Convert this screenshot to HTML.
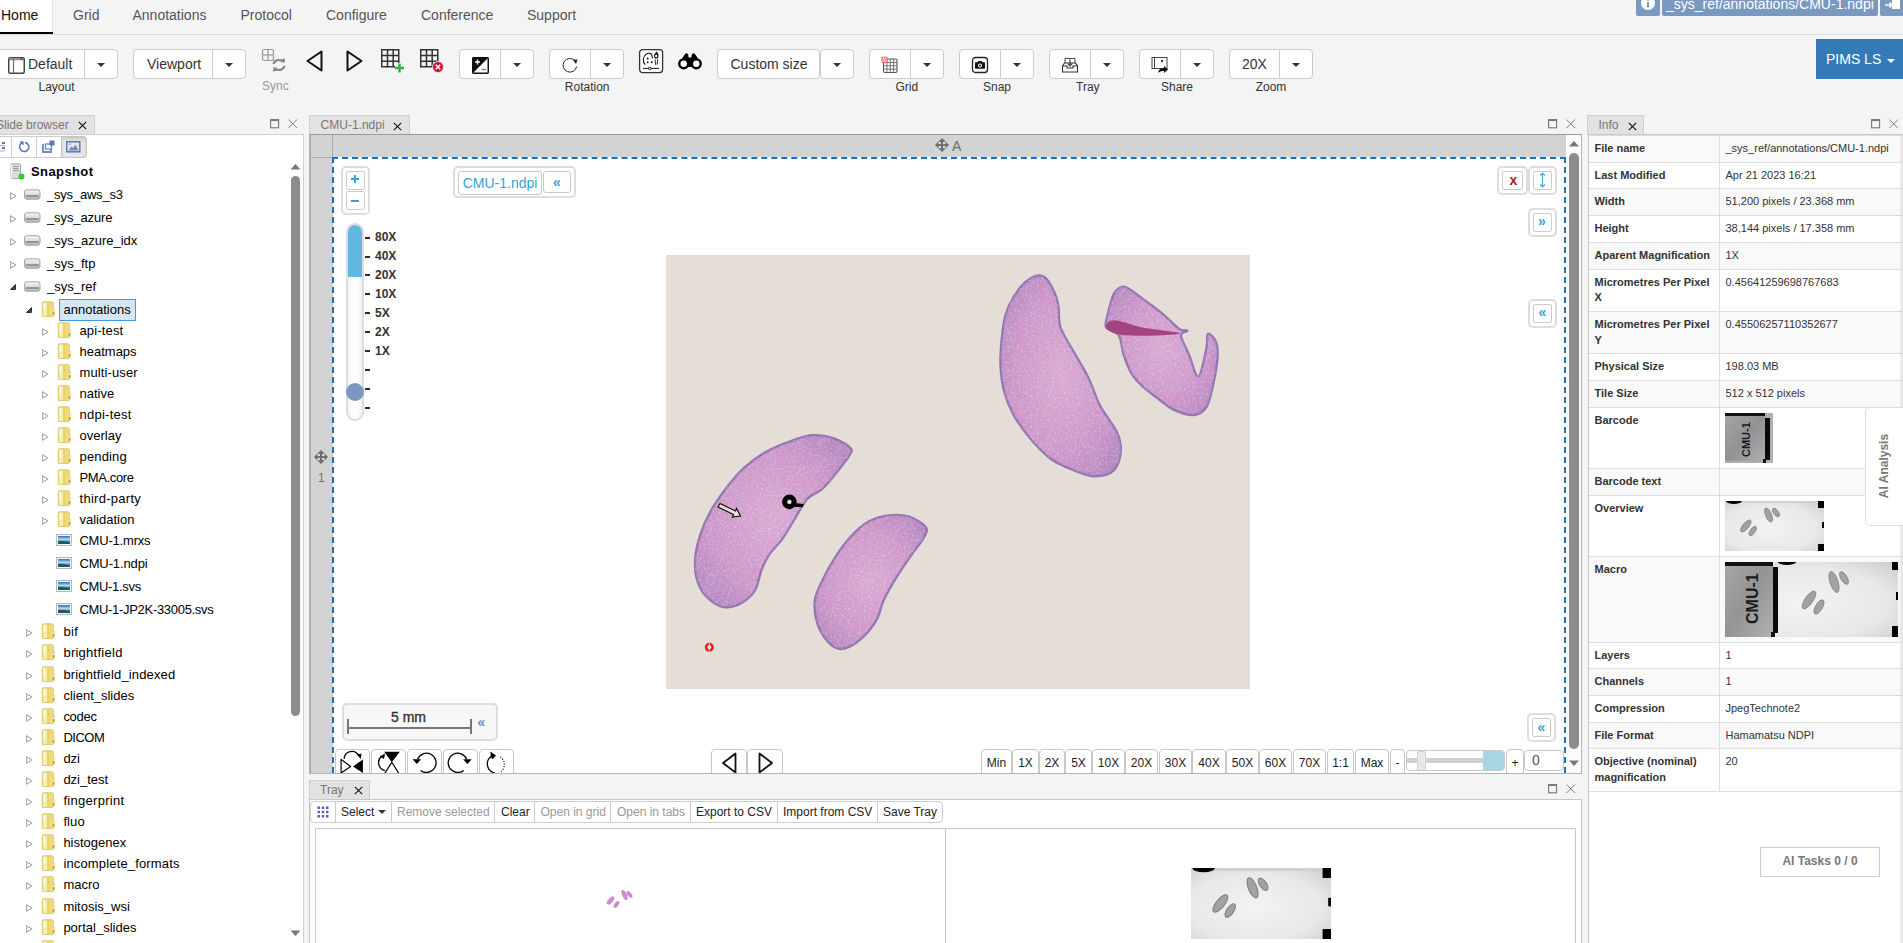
<!DOCTYPE html>
<html><head><meta charset="utf-8">
<style>
*{box-sizing:border-box;margin:0;padding:0}
html,body{width:1903px;height:943px;overflow:hidden}
body{position:relative;background:#f4f4f4;font-family:"Liberation Sans",sans-serif;color:#333}
.a{position:absolute}
.t{position:absolute;white-space:nowrap;line-height:1}
.nav{font-size:14px;color:#555}
.btn{position:absolute;background:#fff;border:1px solid #ccc;border-radius:4px}
.lbl{position:absolute;font-size:12px;color:#333;white-space:nowrap;line-height:1}
.caret{position:absolute;width:0;height:0;border-left:4px solid transparent;border-right:4px solid transparent;border-top:4px solid #333}
</style></head><body>

<!-- NAV -->
<div class="a" style="left:0;top:34px;width:1903px;height:1px;background:#ddd"></div>
<div class="a" style="left:0;top:0;width:53px;height:34px;background:#fff;border-right:1px solid #e4e4e4"></div>
<div class="a" style="left:0;top:32px;width:53px;height:2px;background:#000"></div>
<div class="t nav" style="left:1px;top:8px;color:#111">Home</div>
<div class="t nav" style="left:73px;top:8px">Grid</div>
<div class="t nav" style="left:132.5px;top:8px">Annotations</div>
<div class="t nav" style="left:240.5px;top:8px">Protocol</div>
<div class="t nav" style="left:326px;top:8px">Configure</div>
<div class="t nav" style="left:421px;top:8px">Conference</div>
<div class="t nav" style="left:527px;top:8px">Support</div>


<!-- TOOLBAR -->
<div class="btn" style="left:-4px;top:49px;width:122px;height:30px"></div>
<div class="a" style="left:84px;top:49px;width:1px;height:30px;background:#ccc"></div>
<svg class="a" style="left:8px;top:57px" width="17" height="17" viewBox="0 0 17 17"><rect x="0.75" y="0.75" width="15.5" height="15.5" rx="1.5" fill="#fff" stroke="#444" stroke-width="1.5"/><line x1="1" y1="2.5" x2="16" y2="2.5" stroke="#888" stroke-width="1.5"/><line x1="5.5" y1="2" x2="5.5" y2="16" stroke="#666" stroke-width="1.2"/><rect x="12" y="1" width="3" height="2" fill="#666"/></svg>
<div class="t" style="left:28px;top:56.8px;font-size:14px;color:#333">Default</div>
<div class="caret" style="left:97px;top:63px"></div>
<div class="lbl" style="left:38.5px;top:81.2px">Layout</div>

<div class="btn" style="left:133px;top:49px;width:113px;height:30px"></div>
<div class="a" style="left:212px;top:49px;width:1px;height:30px;background:#ccc"></div>
<div class="t" style="left:147px;top:56.8px;font-size:14px;color:#333">Viewport</div>
<div class="caret" style="left:225px;top:63px"></div>

<svg class="a" style="left:261px;top:48px" width="26" height="26" viewBox="0 0 26 26"><rect x="1.5" y="1.5" width="11" height="11" rx="2" fill="none" stroke="#999" stroke-width="1.2"/><line x1="7" y1="1.5" x2="7" y2="12.5" stroke="#999" stroke-width="1.2"/><line x1="1.5" y1="7" x2="12.5" y2="7" stroke="#999" stroke-width="1.2"/><path d="M12.5 16 A5.5 5.5 0 0 1 22 14" fill="none" stroke="#888" stroke-width="2.2"/><path d="M23.5 18 A5.5 5.5 0 0 1 14 20" fill="none" stroke="#888" stroke-width="2.2"/><path d="M19.5 11.5 L24 10.5 L23.5 15.5 Z" fill="#888"/><path d="M16.5 22.5 L12 23.5 L12.5 18.5 Z" fill="#888"/></svg>
<div class="lbl" style="left:262px;top:79.9px;color:#999">Sync</div>

<svg class="a" style="left:305px;top:49px" width="19" height="24" viewBox="0 0 19 24"><path d="M16.5 2.5 L16.5 21.5 L2.5 12 Z" fill="none" stroke="#111" stroke-width="2" stroke-linejoin="round"/></svg>
<svg class="a" style="left:345px;top:49px" width="19" height="24" viewBox="0 0 19 24"><path d="M2.5 2.5 L2.5 21.5 L16.5 12 Z" fill="none" stroke="#111" stroke-width="2" stroke-linejoin="round"/></svg>

<svg class="a" style="left:380px;top:48px" width="26" height="26" viewBox="0 0 26 26"><rect x="1.75" y="1.75" width="17" height="17" fill="none" stroke="#333" stroke-width="1.5"/><path d="M7.5 1.5V18.5M13.2 1.5V18.5M1.5 7.5H18.5M1.5 13.2H18.5" stroke="#333" stroke-width="1.5"/><rect x="15" y="15" width="9" height="9" fill="#f4f4f4"/><path d="M19.5 15.5V24.5M15 20H24" stroke="#2fb24a" stroke-width="2.4"/></svg>
<svg class="a" style="left:419px;top:48px" width="26" height="26" viewBox="0 0 26 26"><rect x="1.75" y="1.75" width="17" height="17" fill="none" stroke="#333" stroke-width="1.5"/><path d="M7.5 1.5V18.5M13.2 1.5V18.5M1.5 7.5H18.5M1.5 13.2H18.5" stroke="#333" stroke-width="1.5"/><circle cx="19" cy="19" r="5.5" fill="#c8102e" stroke="#f4f4f4" stroke-width="0.8"/><path d="M16.8 16.8L21.2 21.2M21.2 16.8L16.8 21.2" stroke="#fff" stroke-width="1.6"/></svg>

<div class="btn" style="left:459px;top:49px;width:75px;height:30px"></div>
<div class="a" style="left:500px;top:49px;width:1px;height:30px;background:#ccc"></div>
<svg class="a" style="left:472px;top:57px" width="17" height="17" viewBox="0 0 17 17"><rect x="0.75" y="0.75" width="15.5" height="15.5" rx="1" fill="#fff" stroke="#111" stroke-width="1.5"/><path d="M0.5 0.5H16.5L0.5 16.5Z" fill="#111"/><path d="M3 5H8M5.5 2.5V7.5" stroke="#fff" stroke-width="1.3"/><path d="M9.5 12.5H14" stroke="#777" stroke-width="1.3"/></svg>
<div class="caret" style="left:513px;top:63px"></div>

<div class="btn" style="left:549px;top:49px;width:75px;height:30px"></div>
<div class="a" style="left:590px;top:49px;width:1px;height:30px;background:#ccc"></div>
<svg class="a" style="left:561px;top:56px" width="18" height="18" viewBox="0 0 18 18"><path d="M13.8 4.6 A6.8 6.8 0 1 0 15.6 10.5" fill="none" stroke="#222" stroke-width="1"/><path d="M11.8 3.8 L16.6 3.6 L15 8 Z" fill="#222"/></svg>
<div class="caret" style="left:603px;top:63px"></div>
<div class="lbl" style="left:564.8px;top:81px">Rotation</div>

<svg class="a" style="left:638px;top:48px" width="26" height="26" viewBox="-1 -1 26 26"><rect x="0.6" y="0.6" width="23" height="23" rx="3" fill="#fff" stroke="#333" stroke-width="1.3"/><path d="M6.2 15.7 C3.5 13 3.6 8 7 5.4 C8.6 4.2 11.2 3.8 12.6 5.4 C13 6.5 12.8 8.2 13.8 9.3" fill="none" stroke="#111" stroke-width="1.1"/><circle cx="8.7" cy="9.5" r="0.95" fill="#111"/><circle cx="8.7" cy="13.2" r="0.95" fill="#111"/><circle cx="12.8" cy="13.2" r="0.95" fill="#111"/><path d="M17.3 2.6 C18.5 3.6 19.6 4.8 19.5 7 C19.4 8.8 18.3 9.6 17.2 9.6 C15.9 9.6 14.9 8.6 14.9 7 C14.9 5.4 16.2 4.8 17.3 2.6Z" fill="#111"/><circle cx="17.2" cy="7" r="1.2" fill="#fff"/><path d="M16.1 10.3 L16.5 15.7 M18.5 10.3 L18.2 15.7" stroke="#111" stroke-width="0.9"/><path d="M4 19.4 H19.8" stroke="#111" stroke-width="1"/><circle cx="10.7" cy="19.4" r="1.3" fill="#fff" stroke="#111" stroke-width="1"/></svg>
<svg class="a" style="left:677px;top:51px" width="26" height="20" viewBox="0 0 26 20"><path d="M1.8 12.2 L7.2 4.2 Q9.2 0.8 11.2 3.4 L11.6 6.4 H14.4 L14.8 3.4 Q16.8 0.8 18.8 4.2 L24.2 12.2 L19 16 H7Z" fill="#000"/><circle cx="6.7" cy="12.8" r="5.6" fill="#000"/><circle cx="19.3" cy="12.8" r="5.6" fill="#000"/><circle cx="6.7" cy="12.8" r="3.2" fill="#fff"/><circle cx="19.3" cy="12.8" r="3.2" fill="#fff"/></svg>

<div class="btn" style="left:717px;top:49px;width:103px;height:30px"></div>
<div class="btn" style="left:820px;top:49px;width:34px;height:30px"></div>
<div class="t" style="left:730.5px;top:56.8px;font-size:14px;color:#333">Custom size</div>
<div class="caret" style="left:833px;top:63px"></div>

<div class="btn" style="left:869px;top:49px;width:75px;height:30px"></div>
<div class="a" style="left:910px;top:49px;width:1px;height:30px;background:#ccc"></div>
<svg class="a" style="left:881px;top:56px" width="18" height="18" viewBox="0 0 18 18"><rect x="2.5" y="3" width="13.5" height="13.5" rx="1.5" fill="#fff" stroke="#555" stroke-width="1.1"/><path d="M5.9 3V16.5M9.25 3V16.5M12.6 3V16.5M2.5 6.4H16M2.5 9.75H16M2.5 13.1H16" stroke="#666" stroke-width="0.9"/><rect x="1" y="1.2" width="5" height="5" fill="#fff" stroke="#e05060" stroke-width="0.9"/><circle cx="3.5" cy="3.7" r="1.2" fill="none" stroke="#e05060" stroke-width="0.8"/></svg>
<div class="caret" style="left:923px;top:63px"></div>
<div class="lbl" style="left:895.5px;top:81px">Grid</div>

<div class="btn" style="left:959px;top:49px;width:75px;height:30px"></div>
<div class="a" style="left:1000px;top:49px;width:1px;height:30px;background:#ccc"></div>
<svg class="a" style="left:971px;top:56px" width="18" height="18" viewBox="0 0 18 18"><rect x="1.5" y="1.5" width="15" height="15" rx="3" fill="#fff" stroke="#222" stroke-width="1.3"/><path d="M4 7 Q4 6.2 4.8 6.2 H6.4 L7.3 4.9 H10.7 L11.6 6.2 H13.2 Q14 6.2 14 7 V12 Q14 12.8 13.2 12.8 H4.8 Q4 12.8 4 12Z" fill="#111"/><circle cx="9" cy="9.4" r="2" fill="#fff"/><circle cx="9" cy="9.4" r="1" fill="#111"/></svg>
<div class="caret" style="left:1013px;top:63px"></div>
<div class="lbl" style="left:983px;top:81px">Snap</div>

<div class="btn" style="left:1049px;top:49px;width:75px;height:30px"></div>
<div class="a" style="left:1090px;top:49px;width:1px;height:30px;background:#ccc"></div>
<svg class="a" style="left:1061px;top:56px" width="18" height="18" viewBox="0 0 18 18"><path d="M4 8 V2.5 H14 V8" fill="none" stroke="#444" stroke-width="1"/><path d="M1.5 10 L3.5 7 H14.5 L16.5 10 V16 H1.5 Z M1.5 10 H6 V12 H12 V10 H16.5" fill="#fff" stroke="#333" stroke-width="1.1"/><path d="M9 3.5 V9.5 M6.8 7.5 L9 10 L11.2 7.5" fill="none" stroke="#333" stroke-width="1.1"/></svg>
<div class="caret" style="left:1103px;top:63px"></div>
<div class="lbl" style="left:1076px;top:81px">Tray</div>

<div class="btn" style="left:1139px;top:49px;width:75px;height:30px"></div>
<div class="a" style="left:1180px;top:49px;width:1px;height:30px;background:#ccc"></div>
<svg class="a" style="left:1151px;top:56px" width="18" height="18" viewBox="0 0 18 18"><rect x="1" y="1.5" width="15" height="11" fill="none" stroke="#444" stroke-width="1"/><path d="M3.5 1.5V12.5" stroke="#444" stroke-width="1"/><circle cx="11" cy="5" r="1.2" fill="#333"/><path d="M7 17 C7.5 13.5 10 12 13 12 V10 L17 13.5 L13 17 V15 C10.5 15 8.5 15.5 7 17Z" fill="#111"/></svg>
<div class="caret" style="left:1193px;top:63px"></div>
<div class="lbl" style="left:1161px;top:81px">Share</div>

<div class="btn" style="left:1229px;top:49px;width:84px;height:30px"></div>
<div class="a" style="left:1279px;top:49px;width:1px;height:30px;background:#ccc"></div>
<div class="t" style="left:1242px;top:56.8px;font-size:14px;color:#333">20X</div>
<div class="caret" style="left:1292px;top:63px"></div>
<div class="lbl" style="left:1255.7px;top:81px">Zoom</div>

<div class="a" style="left:1816px;top:39px;width:87px;height:40px;background:#337ab7"></div>
<div class="t" style="left:1826px;top:52.2px;font-size:14px;color:#fff">PIMS LS</div>
<div class="caret" style="left:1887px;top:59px;border-top-color:#fff"></div>

<div class="a" style="left:1636px;top:-4px;width:24px;height:19.6px;background:#7b98c0;border-radius:2px"></div>
<svg class="a" style="left:1640px;top:-5px" width="16" height="16" viewBox="0 0 16 16"><circle cx="8" cy="8" r="7" fill="#fff"/><rect x="7" y="7" width="2" height="5" fill="#7b98c0"/><circle cx="8" cy="4.5" r="1.2" fill="#7b98c0"/></svg>
<div class="a" style="left:1662px;top:-4px;width:216px;height:19.6px;background:#7b98c0;border-radius:2px"></div>
<div class="t" style="left:1666px;top:-2.8px;font-size:14px;color:#fff">_sys_ref/annotations/CMU-1.ndpi</div>
<div class="a" style="left:1880px;top:-4px;width:30px;height:19.6px;background:#7b98c0;border-radius:2px"></div>
<svg class="a" style="left:1884px;top:-2px" width="19" height="16" viewBox="0 0 19 16"><rect x="8" y="0" width="8" height="11" fill="#fff"/><path d="M1 7 H8 M5.5 4.5 L8 7 L5.5 9.5" fill="none" stroke="#fff" stroke-width="1.5"/></svg>

<!-- SLIDE BROWSER -->
<div class="a" style="left:-2px;top:115px;width:97px;height:20px;background:#e2e2e2;border:1px solid #cfcfcf;border-bottom:none"></div>
<div class="t" style="left:-4px;top:118.6px;font-size:12px;color:#777">Slide browser</div>
<svg class="a" style="left:78px;top:121px" width="9" height="9" viewBox="0 0 9 9"><path d="M0.8 0.8L8.2 8.2M8.2 0.8L0.8 8.2" stroke="#111" stroke-width="1.1"/></svg>
<svg class="a" style="left:270px;top:119px" width="10" height="10" viewBox="0 0 10 10"><rect x="0.6" y="0.6" width="8" height="8.2" fill="none" stroke="#777" stroke-width="1.1"/><line x1="0.6" y1="1.5" x2="8.6" y2="1.5" stroke="#777" stroke-width="1.1"/></svg><svg class="a" style="left:288px;top:119px" width="10" height="10" viewBox="0 0 10 10"><path d="M0.5 0.5L9 9M9 0.5L0.5 9" stroke="#777" stroke-width="0.9"/></svg>
<div class="a" style="left:-1px;top:134px;width:305px;height:820px;background:#fff;border:1px solid #d0d0d0"></div>
<div class="a" style="left:-14px;top:136px;width:101px;height:22px;border:1px solid #ccc;border-radius:4px;background:#fff"></div>
<div class="a" style="left:61px;top:136px;width:26px;height:22px;border:1px solid #c4c4c4;border-radius:0 4px 4px 0;background:#e6e6e6;box-shadow:inset 0 2px 3px rgba(0,0,0,.12)"></div>
<div class="a" style="left:11px;top:137px;width:1px;height:20px;background:#ccc"></div>
<div class="a" style="left:36px;top:137px;width:1px;height:20px;background:#ccc"></div>
<svg class="a" style="left:0px;top:141px" width="6" height="12" viewBox="0 0 6 12"><rect x="2" y="1" width="3" height="2" fill="#5a78c4"/><rect x="2" y="6" width="3" height="2" fill="#5a78c4"/><rect x="0" y="4" width="5" height="1" fill="#9ab"/><rect x="0" y="9.5" width="5" height="1" fill="#9ab"/></svg>
<svg class="a" style="left:18px;top:141px" width="12" height="12" viewBox="0 0 12 12"><path d="M3.5 2.2 A4.6 4.6 0 1 0 7 1.4" fill="none" stroke="#5a78c4" stroke-width="1.6"/><path d="M1.5 0.5 H5.5 V4.5Z" fill="#4a66b8"/></svg>
<svg class="a" style="left:42px;top:140px" width="13" height="13" viewBox="0 0 13 13"><path d="M1 4 V12 H9 V9" fill="none" stroke="#6a88cc" stroke-width="1.8"/><rect x="3.5" y="4" width="6" height="5" fill="none" stroke="#6a88cc" stroke-width="1.3"/><rect x="7.5" y="0.5" width="5" height="5" fill="#5a78c4"/></svg>
<svg class="a" style="left:66px;top:141px" width="15" height="12" viewBox="0 0 15 12"><rect x="0.8" y="0.8" width="13" height="10" fill="none" stroke="#5a78c4" stroke-width="1.5"/><path d="M2.5 9.5 L5.5 5.5 L7 7 L9.5 3.5 L12.5 9.5Z" fill="#7088c8"/><circle cx="4" cy="3.2" r="0.9" fill="#8aa0d0"/></svg>
<svg class="a" style="left:290px;top:163px" width="11" height="7" viewBox="0 0 11 7"><path d="M0.5 6.5 L5.5 1 L10.5 6.5Z" fill="#777"/></svg>
<div class="a" style="left:290.5px;top:176px;width:9.5px;height:540px;background:#8c8c8c;border-radius:5px"></div>
<svg class="a" style="left:290px;top:930px" width="11" height="7" viewBox="0 0 11 7"><path d="M0.5 0.5 L5.5 6 L10.5 0.5Z" fill="#777"/></svg>
<svg class="a" style="left:9px;top:163px" width="16" height="17" viewBox="0 0 16 17"><path d="M2 2 Q2 0.8 3.5 0.8 H10 Q11.5 0.8 11.5 2 V14.5 Q11.5 15.5 10 15.5 H3.5 Q2 15.5 2 14.5Z" fill="#dcdcdc" stroke="#9a9a9a" stroke-width="0.8"/><path d="M4 3.5H9.5M4 5.5H9.5M4 7.5H9.5" stroke="#888" stroke-width="0.8"/><path d="M2.5 2 V14.5" stroke="#f5f5f5" stroke-width="1"/><circle cx="12.5" cy="13.5" r="3" fill="#2bd02b"/></svg>
<div class="t" style="left:31px;top:164.8px;font-size:13px;font-weight:bold;color:#000;letter-spacing:0.4px">Snapshot</div>
<svg class="a" style="left:9.5px;top:191.7px" width="7" height="8" viewBox="0 0 7 8"><path d="M0.7 0.7 L5.8 4 L0.7 7.3Z" fill="#fff" stroke="#9a9a9a" stroke-width="1"/></svg>
<svg class="a" style="left:24px;top:188.7px" width="17" height="11" viewBox="0 0 17 11"><defs><linearGradient id="dg" x1="0" y1="0" x2="0" y2="1"><stop offset="0" stop-color="#f6f6f6"/><stop offset="0.5" stop-color="#dcdcdc"/><stop offset="1" stop-color="#b4b4b4"/></linearGradient></defs><rect x="0.5" y="0.8" width="15.5" height="9.4" rx="2.2" fill="url(#dg)" stroke="#9c9c9c" stroke-width="0.9"/><path d="M2 7 H14.5" stroke="#707070" stroke-width="1.2"/><rect x="12.5" y="6.4" width="1.6" height="1.2" fill="#3c3"/></svg>
<div class="t" style="left:47px;top:187.70px;font-size:13px;color:#000;letter-spacing:-0.210px">_sys_aws_s3</div>
<svg class="a" style="left:9.5px;top:214.5px" width="7" height="8" viewBox="0 0 7 8"><path d="M0.7 0.7 L5.8 4 L0.7 7.3Z" fill="#fff" stroke="#9a9a9a" stroke-width="1"/></svg>
<svg class="a" style="left:24px;top:211.5px" width="17" height="11" viewBox="0 0 17 11"><defs><linearGradient id="dg" x1="0" y1="0" x2="0" y2="1"><stop offset="0" stop-color="#f6f6f6"/><stop offset="0.5" stop-color="#dcdcdc"/><stop offset="1" stop-color="#b4b4b4"/></linearGradient></defs><rect x="0.5" y="0.8" width="15.5" height="9.4" rx="2.2" fill="url(#dg)" stroke="#9c9c9c" stroke-width="0.9"/><path d="M2 7 H14.5" stroke="#707070" stroke-width="1.2"/><rect x="12.5" y="6.4" width="1.6" height="1.2" fill="#3c3"/></svg>
<div class="t" style="left:47px;top:210.50px;font-size:13px;color:#000;letter-spacing:-0.111px">_sys_azure</div>
<svg class="a" style="left:9.5px;top:237.5px" width="7" height="8" viewBox="0 0 7 8"><path d="M0.7 0.7 L5.8 4 L0.7 7.3Z" fill="#fff" stroke="#9a9a9a" stroke-width="1"/></svg>
<svg class="a" style="left:24px;top:234.5px" width="17" height="11" viewBox="0 0 17 11"><defs><linearGradient id="dg" x1="0" y1="0" x2="0" y2="1"><stop offset="0" stop-color="#f6f6f6"/><stop offset="0.5" stop-color="#dcdcdc"/><stop offset="1" stop-color="#b4b4b4"/></linearGradient></defs><rect x="0.5" y="0.8" width="15.5" height="9.4" rx="2.2" fill="url(#dg)" stroke="#9c9c9c" stroke-width="0.9"/><path d="M2 7 H14.5" stroke="#707070" stroke-width="1.2"/><rect x="12.5" y="6.4" width="1.6" height="1.2" fill="#3c3"/></svg>
<div class="t" style="left:47px;top:233.50px;font-size:13px;color:#000">_sys_azure_idx</div>
<svg class="a" style="left:9.5px;top:260.5px" width="7" height="8" viewBox="0 0 7 8"><path d="M0.7 0.7 L5.8 4 L0.7 7.3Z" fill="#fff" stroke="#9a9a9a" stroke-width="1"/></svg>
<svg class="a" style="left:24px;top:257.5px" width="17" height="11" viewBox="0 0 17 11"><defs><linearGradient id="dg" x1="0" y1="0" x2="0" y2="1"><stop offset="0" stop-color="#f6f6f6"/><stop offset="0.5" stop-color="#dcdcdc"/><stop offset="1" stop-color="#b4b4b4"/></linearGradient></defs><rect x="0.5" y="0.8" width="15.5" height="9.4" rx="2.2" fill="url(#dg)" stroke="#9c9c9c" stroke-width="0.9"/><path d="M2 7 H14.5" stroke="#707070" stroke-width="1.2"/><rect x="12.5" y="6.4" width="1.6" height="1.2" fill="#3c3"/></svg>
<div class="t" style="left:47px;top:256.50px;font-size:13px;color:#000">_sys_ftp</div>
<svg class="a" style="left:10.0px;top:283.6px" width="6" height="6" viewBox="0 0 6 6"><path d="M5.5 0.5 L5.5 5.5 L0.5 5.5Z" fill="#444" stroke="#222" stroke-width="0.9" stroke-linejoin="round"/></svg>
<svg class="a" style="left:24px;top:280.6px" width="17" height="11" viewBox="0 0 17 11"><defs><linearGradient id="dg" x1="0" y1="0" x2="0" y2="1"><stop offset="0" stop-color="#f6f6f6"/><stop offset="0.5" stop-color="#dcdcdc"/><stop offset="1" stop-color="#b4b4b4"/></linearGradient></defs><rect x="0.5" y="0.8" width="15.5" height="9.4" rx="2.2" fill="url(#dg)" stroke="#9c9c9c" stroke-width="0.9"/><path d="M2 7 H14.5" stroke="#707070" stroke-width="1.2"/><rect x="12.5" y="6.4" width="1.6" height="1.2" fill="#3c3"/></svg>
<div class="t" style="left:47px;top:279.60px;font-size:13px;color:#000">_sys_ref</div>
<svg class="a" style="left:26.0px;top:306.7px" width="6" height="6" viewBox="0 0 6 6"><path d="M5.5 0.5 L5.5 5.5 L0.5 5.5Z" fill="#444" stroke="#222" stroke-width="0.9" stroke-linejoin="round"/></svg>
<svg class="a" style="left:41px;top:300.7px" width="14" height="16" viewBox="0 0 14 16"><path d="M1.2 2 Q1.2 0.8 2.4 0.8 H11 Q12.3 0.8 12.3 2 V14.8 Q12.3 15.8 11 15.8 H2.4 Q1.2 15.8 1.2 14.8Z" fill="#ecd36c" stroke="#d6b74a" stroke-width="0.7"/><rect x="1.8" y="1.5" width="5" height="13.6" fill="#f8eca6"/><path d="M3.6 2 V9" stroke="#fff" stroke-width="1.3"/><path d="M7 1 V15.5" stroke="#d9bb55" stroke-width="0.9"/><rect x="7.5" y="1.5" width="4.3" height="13.6" fill="#f0da7c"/><rect x="12" y="7.8" width="1.6" height="6.5" fill="#e4c65a"/><rect x="11.9" y="9" width="1" height="2" fill="#e8f0f8"/><rect x="11.9" y="11" width="1" height="2.6" fill="#3a9be0"/></svg>
<div class="a" style="left:59px;top:299px;width:77px;height:22px;background:#d3e7f7;border:1px solid #3e9be0"></div>
<div class="t" style="left:63.5px;top:302.70px;font-size:13px;color:#000">annotations</div>
<svg class="a" style="left:41.5px;top:327.6px" width="7" height="8" viewBox="0 0 7 8"><path d="M0.7 0.7 L5.8 4 L0.7 7.3Z" fill="#fff" stroke="#9a9a9a" stroke-width="1"/></svg>
<svg class="a" style="left:57px;top:321.6px" width="14" height="16" viewBox="0 0 14 16"><path d="M1.2 2 Q1.2 0.8 2.4 0.8 H11 Q12.3 0.8 12.3 2 V14.8 Q12.3 15.8 11 15.8 H2.4 Q1.2 15.8 1.2 14.8Z" fill="#ecd36c" stroke="#d6b74a" stroke-width="0.7"/><rect x="1.8" y="1.5" width="5" height="13.6" fill="#f8eca6"/><path d="M3.6 2 V9" stroke="#fff" stroke-width="1.3"/><path d="M7 1 V15.5" stroke="#d9bb55" stroke-width="0.9"/><rect x="7.5" y="1.5" width="4.3" height="13.6" fill="#f0da7c"/><rect x="12" y="7.8" width="1.6" height="6.5" fill="#e4c65a"/><rect x="11.9" y="9" width="1" height="2" fill="#e8f0f8"/><rect x="11.9" y="11" width="1" height="2.6" fill="#3a9be0"/></svg>
<div class="t" style="left:79.5px;top:323.60px;font-size:13px;color:#000;letter-spacing:0.143px">api-test</div>
<svg class="a" style="left:41.5px;top:348.6px" width="7" height="8" viewBox="0 0 7 8"><path d="M0.7 0.7 L5.8 4 L0.7 7.3Z" fill="#fff" stroke="#9a9a9a" stroke-width="1"/></svg>
<svg class="a" style="left:57px;top:342.6px" width="14" height="16" viewBox="0 0 14 16"><path d="M1.2 2 Q1.2 0.8 2.4 0.8 H11 Q12.3 0.8 12.3 2 V14.8 Q12.3 15.8 11 15.8 H2.4 Q1.2 15.8 1.2 14.8Z" fill="#ecd36c" stroke="#d6b74a" stroke-width="0.7"/><rect x="1.8" y="1.5" width="5" height="13.6" fill="#f8eca6"/><path d="M3.6 2 V9" stroke="#fff" stroke-width="1.3"/><path d="M7 1 V15.5" stroke="#d9bb55" stroke-width="0.9"/><rect x="7.5" y="1.5" width="4.3" height="13.6" fill="#f0da7c"/><rect x="12" y="7.8" width="1.6" height="6.5" fill="#e4c65a"/><rect x="11.9" y="9" width="1" height="2" fill="#e8f0f8"/><rect x="11.9" y="11" width="1" height="2.6" fill="#3a9be0"/></svg>
<div class="t" style="left:79.5px;top:344.60px;font-size:13px;color:#000">heatmaps</div>
<svg class="a" style="left:41.5px;top:369.6px" width="7" height="8" viewBox="0 0 7 8"><path d="M0.7 0.7 L5.8 4 L0.7 7.3Z" fill="#fff" stroke="#9a9a9a" stroke-width="1"/></svg>
<svg class="a" style="left:57px;top:363.6px" width="14" height="16" viewBox="0 0 14 16"><path d="M1.2 2 Q1.2 0.8 2.4 0.8 H11 Q12.3 0.8 12.3 2 V14.8 Q12.3 15.8 11 15.8 H2.4 Q1.2 15.8 1.2 14.8Z" fill="#ecd36c" stroke="#d6b74a" stroke-width="0.7"/><rect x="1.8" y="1.5" width="5" height="13.6" fill="#f8eca6"/><path d="M3.6 2 V9" stroke="#fff" stroke-width="1.3"/><path d="M7 1 V15.5" stroke="#d9bb55" stroke-width="0.9"/><rect x="7.5" y="1.5" width="4.3" height="13.6" fill="#f0da7c"/><rect x="12" y="7.8" width="1.6" height="6.5" fill="#e4c65a"/><rect x="11.9" y="9" width="1" height="2" fill="#e8f0f8"/><rect x="11.9" y="11" width="1" height="2.6" fill="#3a9be0"/></svg>
<div class="t" style="left:79.5px;top:365.60px;font-size:13px;color:#000;letter-spacing:0.122px">multi-user</div>
<svg class="a" style="left:41.5px;top:390.6px" width="7" height="8" viewBox="0 0 7 8"><path d="M0.7 0.7 L5.8 4 L0.7 7.3Z" fill="#fff" stroke="#9a9a9a" stroke-width="1"/></svg>
<svg class="a" style="left:57px;top:384.6px" width="14" height="16" viewBox="0 0 14 16"><path d="M1.2 2 Q1.2 0.8 2.4 0.8 H11 Q12.3 0.8 12.3 2 V14.8 Q12.3 15.8 11 15.8 H2.4 Q1.2 15.8 1.2 14.8Z" fill="#ecd36c" stroke="#d6b74a" stroke-width="0.7"/><rect x="1.8" y="1.5" width="5" height="13.6" fill="#f8eca6"/><path d="M3.6 2 V9" stroke="#fff" stroke-width="1.3"/><path d="M7 1 V15.5" stroke="#d9bb55" stroke-width="0.9"/><rect x="7.5" y="1.5" width="4.3" height="13.6" fill="#f0da7c"/><rect x="12" y="7.8" width="1.6" height="6.5" fill="#e4c65a"/><rect x="11.9" y="9" width="1" height="2" fill="#e8f0f8"/><rect x="11.9" y="11" width="1" height="2.6" fill="#3a9be0"/></svg>
<div class="t" style="left:79.5px;top:386.60px;font-size:13px;color:#000">native</div>
<svg class="a" style="left:41.5px;top:411.6px" width="7" height="8" viewBox="0 0 7 8"><path d="M0.7 0.7 L5.8 4 L0.7 7.3Z" fill="#fff" stroke="#9a9a9a" stroke-width="1"/></svg>
<svg class="a" style="left:57px;top:405.6px" width="14" height="16" viewBox="0 0 14 16"><path d="M1.2 2 Q1.2 0.8 2.4 0.8 H11 Q12.3 0.8 12.3 2 V14.8 Q12.3 15.8 11 15.8 H2.4 Q1.2 15.8 1.2 14.8Z" fill="#ecd36c" stroke="#d6b74a" stroke-width="0.7"/><rect x="1.8" y="1.5" width="5" height="13.6" fill="#f8eca6"/><path d="M3.6 2 V9" stroke="#fff" stroke-width="1.3"/><path d="M7 1 V15.5" stroke="#d9bb55" stroke-width="0.9"/><rect x="7.5" y="1.5" width="4.3" height="13.6" fill="#f0da7c"/><rect x="12" y="7.8" width="1.6" height="6.5" fill="#e4c65a"/><rect x="11.9" y="9" width="1" height="2" fill="#e8f0f8"/><rect x="11.9" y="11" width="1" height="2.6" fill="#3a9be0"/></svg>
<div class="t" style="left:79.5px;top:407.60px;font-size:13px;color:#000;letter-spacing:0.250px">ndpi-test</div>
<svg class="a" style="left:41.5px;top:432.6px" width="7" height="8" viewBox="0 0 7 8"><path d="M0.7 0.7 L5.8 4 L0.7 7.3Z" fill="#fff" stroke="#9a9a9a" stroke-width="1"/></svg>
<svg class="a" style="left:57px;top:426.6px" width="14" height="16" viewBox="0 0 14 16"><path d="M1.2 2 Q1.2 0.8 2.4 0.8 H11 Q12.3 0.8 12.3 2 V14.8 Q12.3 15.8 11 15.8 H2.4 Q1.2 15.8 1.2 14.8Z" fill="#ecd36c" stroke="#d6b74a" stroke-width="0.7"/><rect x="1.8" y="1.5" width="5" height="13.6" fill="#f8eca6"/><path d="M3.6 2 V9" stroke="#fff" stroke-width="1.3"/><path d="M7 1 V15.5" stroke="#d9bb55" stroke-width="0.9"/><rect x="7.5" y="1.5" width="4.3" height="13.6" fill="#f0da7c"/><rect x="12" y="7.8" width="1.6" height="6.5" fill="#e4c65a"/><rect x="11.9" y="9" width="1" height="2" fill="#e8f0f8"/><rect x="11.9" y="11" width="1" height="2.6" fill="#3a9be0"/></svg>
<div class="t" style="left:79.5px;top:428.60px;font-size:13px;color:#000">overlay</div>
<svg class="a" style="left:41.5px;top:453.6px" width="7" height="8" viewBox="0 0 7 8"><path d="M0.7 0.7 L5.8 4 L0.7 7.3Z" fill="#fff" stroke="#9a9a9a" stroke-width="1"/></svg>
<svg class="a" style="left:57px;top:447.6px" width="14" height="16" viewBox="0 0 14 16"><path d="M1.2 2 Q1.2 0.8 2.4 0.8 H11 Q12.3 0.8 12.3 2 V14.8 Q12.3 15.8 11 15.8 H2.4 Q1.2 15.8 1.2 14.8Z" fill="#ecd36c" stroke="#d6b74a" stroke-width="0.7"/><rect x="1.8" y="1.5" width="5" height="13.6" fill="#f8eca6"/><path d="M3.6 2 V9" stroke="#fff" stroke-width="1.3"/><path d="M7 1 V15.5" stroke="#d9bb55" stroke-width="0.9"/><rect x="7.5" y="1.5" width="4.3" height="13.6" fill="#f0da7c"/><rect x="12" y="7.8" width="1.6" height="6.5" fill="#e4c65a"/><rect x="11.9" y="9" width="1" height="2" fill="#e8f0f8"/><rect x="11.9" y="11" width="1" height="2.6" fill="#3a9be0"/></svg>
<div class="t" style="left:79.5px;top:449.60px;font-size:13px;color:#000;letter-spacing:0.150px">pending</div>
<svg class="a" style="left:41.5px;top:474.6px" width="7" height="8" viewBox="0 0 7 8"><path d="M0.7 0.7 L5.8 4 L0.7 7.3Z" fill="#fff" stroke="#9a9a9a" stroke-width="1"/></svg>
<svg class="a" style="left:57px;top:468.6px" width="14" height="16" viewBox="0 0 14 16"><path d="M1.2 2 Q1.2 0.8 2.4 0.8 H11 Q12.3 0.8 12.3 2 V14.8 Q12.3 15.8 11 15.8 H2.4 Q1.2 15.8 1.2 14.8Z" fill="#ecd36c" stroke="#d6b74a" stroke-width="0.7"/><rect x="1.8" y="1.5" width="5" height="13.6" fill="#f8eca6"/><path d="M3.6 2 V9" stroke="#fff" stroke-width="1.3"/><path d="M7 1 V15.5" stroke="#d9bb55" stroke-width="0.9"/><rect x="7.5" y="1.5" width="4.3" height="13.6" fill="#f0da7c"/><rect x="12" y="7.8" width="1.6" height="6.5" fill="#e4c65a"/><rect x="11.9" y="9" width="1" height="2" fill="#e8f0f8"/><rect x="11.9" y="11" width="1" height="2.6" fill="#3a9be0"/></svg>
<div class="t" style="left:79.5px;top:470.60px;font-size:13px;color:#000;letter-spacing:-0.371px">PMA.core</div>
<svg class="a" style="left:41.5px;top:495.6px" width="7" height="8" viewBox="0 0 7 8"><path d="M0.7 0.7 L5.8 4 L0.7 7.3Z" fill="#fff" stroke="#9a9a9a" stroke-width="1"/></svg>
<svg class="a" style="left:57px;top:489.6px" width="14" height="16" viewBox="0 0 14 16"><path d="M1.2 2 Q1.2 0.8 2.4 0.8 H11 Q12.3 0.8 12.3 2 V14.8 Q12.3 15.8 11 15.8 H2.4 Q1.2 15.8 1.2 14.8Z" fill="#ecd36c" stroke="#d6b74a" stroke-width="0.7"/><rect x="1.8" y="1.5" width="5" height="13.6" fill="#f8eca6"/><path d="M3.6 2 V9" stroke="#fff" stroke-width="1.3"/><path d="M7 1 V15.5" stroke="#d9bb55" stroke-width="0.9"/><rect x="7.5" y="1.5" width="4.3" height="13.6" fill="#f0da7c"/><rect x="12" y="7.8" width="1.6" height="6.5" fill="#e4c65a"/><rect x="11.9" y="9" width="1" height="2" fill="#e8f0f8"/><rect x="11.9" y="11" width="1" height="2.6" fill="#3a9be0"/></svg>
<div class="t" style="left:79.5px;top:491.60px;font-size:13px;color:#000;letter-spacing:0.280px">third-party</div>
<svg class="a" style="left:41.5px;top:516.6px" width="7" height="8" viewBox="0 0 7 8"><path d="M0.7 0.7 L5.8 4 L0.7 7.3Z" fill="#fff" stroke="#9a9a9a" stroke-width="1"/></svg>
<svg class="a" style="left:57px;top:510.6px" width="14" height="16" viewBox="0 0 14 16"><path d="M1.2 2 Q1.2 0.8 2.4 0.8 H11 Q12.3 0.8 12.3 2 V14.8 Q12.3 15.8 11 15.8 H2.4 Q1.2 15.8 1.2 14.8Z" fill="#ecd36c" stroke="#d6b74a" stroke-width="0.7"/><rect x="1.8" y="1.5" width="5" height="13.6" fill="#f8eca6"/><path d="M3.6 2 V9" stroke="#fff" stroke-width="1.3"/><path d="M7 1 V15.5" stroke="#d9bb55" stroke-width="0.9"/><rect x="7.5" y="1.5" width="4.3" height="13.6" fill="#f0da7c"/><rect x="12" y="7.8" width="1.6" height="6.5" fill="#e4c65a"/><rect x="11.9" y="9" width="1" height="2" fill="#e8f0f8"/><rect x="11.9" y="11" width="1" height="2.6" fill="#3a9be0"/></svg>
<div class="t" style="left:79.5px;top:512.60px;font-size:13px;color:#000">validation</div>
<svg class="a" style="left:56px;top:533.8px" width="16" height="12" viewBox="0 0 16 12"><defs><linearGradient id="fg" x1="0" y1="0" x2="0" y2="1"><stop offset="0" stop-color="#2a6fc0"/><stop offset="0.45" stop-color="#b8d8f0"/><stop offset="0.75" stop-color="#2a6aa0"/><stop offset="1" stop-color="#1f4f6a"/></linearGradient></defs><rect x="0.5" y="0.5" width="15" height="11" fill="#f4f6f8" stroke="#a0a8b0" stroke-width="0.8"/><rect x="2" y="2" width="12" height="8" fill="url(#fg)"/><path d="M2 7 Q7 6 14 9 V10 H2Z" fill="#1e5a48" opacity="0.8"/></svg>
<div class="t" style="left:79.4px;top:533.80px;font-size:13px;color:#000;letter-spacing:-0.189px">CMU-1.mrxs</div>
<svg class="a" style="left:56px;top:556.8px" width="16" height="12" viewBox="0 0 16 12"><defs><linearGradient id="fg" x1="0" y1="0" x2="0" y2="1"><stop offset="0" stop-color="#2a6fc0"/><stop offset="0.45" stop-color="#b8d8f0"/><stop offset="0.75" stop-color="#2a6aa0"/><stop offset="1" stop-color="#1f4f6a"/></linearGradient></defs><rect x="0.5" y="0.5" width="15" height="11" fill="#f4f6f8" stroke="#a0a8b0" stroke-width="0.8"/><rect x="2" y="2" width="12" height="8" fill="url(#fg)"/><path d="M2 7 Q7 6 14 9 V10 H2Z" fill="#1e5a48" opacity="0.8"/></svg>
<div class="t" style="left:79.4px;top:556.80px;font-size:13px;color:#000;letter-spacing:-0.122px">CMU-1.ndpi</div>
<svg class="a" style="left:56px;top:579.8px" width="16" height="12" viewBox="0 0 16 12"><defs><linearGradient id="fg" x1="0" y1="0" x2="0" y2="1"><stop offset="0" stop-color="#2a6fc0"/><stop offset="0.45" stop-color="#b8d8f0"/><stop offset="0.75" stop-color="#2a6aa0"/><stop offset="1" stop-color="#1f4f6a"/></linearGradient></defs><rect x="0.5" y="0.5" width="15" height="11" fill="#f4f6f8" stroke="#a0a8b0" stroke-width="0.8"/><rect x="2" y="2" width="12" height="8" fill="url(#fg)"/><path d="M2 7 Q7 6 14 9 V10 H2Z" fill="#1e5a48" opacity="0.8"/></svg>
<div class="t" style="left:79.4px;top:579.80px;font-size:13px;color:#000;letter-spacing:-0.312px">CMU-1.svs</div>
<svg class="a" style="left:56px;top:602.8px" width="16" height="12" viewBox="0 0 16 12"><defs><linearGradient id="fg" x1="0" y1="0" x2="0" y2="1"><stop offset="0" stop-color="#2a6fc0"/><stop offset="0.45" stop-color="#b8d8f0"/><stop offset="0.75" stop-color="#2a6aa0"/><stop offset="1" stop-color="#1f4f6a"/></linearGradient></defs><rect x="0.5" y="0.5" width="15" height="11" fill="#f4f6f8" stroke="#a0a8b0" stroke-width="0.8"/><rect x="2" y="2" width="12" height="8" fill="url(#fg)"/><path d="M2 7 Q7 6 14 9 V10 H2Z" fill="#1e5a48" opacity="0.8"/></svg>
<div class="t" style="left:79.4px;top:602.80px;font-size:13px;color:#000;letter-spacing:-0.305px">CMU-1-JP2K-33005.svs</div>
<svg class="a" style="left:25.5px;top:629.4px" width="7" height="8" viewBox="0 0 7 8"><path d="M0.7 0.7 L5.8 4 L0.7 7.3Z" fill="#fff" stroke="#9a9a9a" stroke-width="1"/></svg>
<svg class="a" style="left:41px;top:623.4px" width="14" height="16" viewBox="0 0 14 16"><path d="M1.2 2 Q1.2 0.8 2.4 0.8 H11 Q12.3 0.8 12.3 2 V14.8 Q12.3 15.8 11 15.8 H2.4 Q1.2 15.8 1.2 14.8Z" fill="#ecd36c" stroke="#d6b74a" stroke-width="0.7"/><rect x="1.8" y="1.5" width="5" height="13.6" fill="#f8eca6"/><path d="M3.6 2 V9" stroke="#fff" stroke-width="1.3"/><path d="M7 1 V15.5" stroke="#d9bb55" stroke-width="0.9"/><rect x="7.5" y="1.5" width="4.3" height="13.6" fill="#f0da7c"/><rect x="12" y="7.8" width="1.6" height="6.5" fill="#e4c65a"/><rect x="11.9" y="9" width="1" height="2" fill="#e8f0f8"/><rect x="11.9" y="11" width="1" height="2.6" fill="#3a9be0"/></svg>
<div class="t" style="left:63.4px;top:625.40px;font-size:13px;color:#000;letter-spacing:0.350px">bif</div>
<svg class="a" style="left:25.5px;top:650.49px" width="7" height="8" viewBox="0 0 7 8"><path d="M0.7 0.7 L5.8 4 L0.7 7.3Z" fill="#fff" stroke="#9a9a9a" stroke-width="1"/></svg>
<svg class="a" style="left:41px;top:644.49px" width="14" height="16" viewBox="0 0 14 16"><path d="M1.2 2 Q1.2 0.8 2.4 0.8 H11 Q12.3 0.8 12.3 2 V14.8 Q12.3 15.8 11 15.8 H2.4 Q1.2 15.8 1.2 14.8Z" fill="#ecd36c" stroke="#d6b74a" stroke-width="0.7"/><rect x="1.8" y="1.5" width="5" height="13.6" fill="#f8eca6"/><path d="M3.6 2 V9" stroke="#fff" stroke-width="1.3"/><path d="M7 1 V15.5" stroke="#d9bb55" stroke-width="0.9"/><rect x="7.5" y="1.5" width="4.3" height="13.6" fill="#f0da7c"/><rect x="12" y="7.8" width="1.6" height="6.5" fill="#e4c65a"/><rect x="11.9" y="9" width="1" height="2" fill="#e8f0f8"/><rect x="11.9" y="11" width="1" height="2.6" fill="#3a9be0"/></svg>
<div class="t" style="left:63.4px;top:646.49px;font-size:13px;color:#000;letter-spacing:0.260px">brightfield</div>
<svg class="a" style="left:25.5px;top:671.5799999999999px" width="7" height="8" viewBox="0 0 7 8"><path d="M0.7 0.7 L5.8 4 L0.7 7.3Z" fill="#fff" stroke="#9a9a9a" stroke-width="1"/></svg>
<svg class="a" style="left:41px;top:665.5799999999999px" width="14" height="16" viewBox="0 0 14 16"><path d="M1.2 2 Q1.2 0.8 2.4 0.8 H11 Q12.3 0.8 12.3 2 V14.8 Q12.3 15.8 11 15.8 H2.4 Q1.2 15.8 1.2 14.8Z" fill="#ecd36c" stroke="#d6b74a" stroke-width="0.7"/><rect x="1.8" y="1.5" width="5" height="13.6" fill="#f8eca6"/><path d="M3.6 2 V9" stroke="#fff" stroke-width="1.3"/><path d="M7 1 V15.5" stroke="#d9bb55" stroke-width="0.9"/><rect x="7.5" y="1.5" width="4.3" height="13.6" fill="#f0da7c"/><rect x="12" y="7.8" width="1.6" height="6.5" fill="#e4c65a"/><rect x="11.9" y="9" width="1" height="2" fill="#e8f0f8"/><rect x="11.9" y="11" width="1" height="2.6" fill="#3a9be0"/></svg>
<div class="t" style="left:63.4px;top:667.58px;font-size:13px;color:#000;letter-spacing:0.150px">brightfield_indexed</div>
<svg class="a" style="left:25.5px;top:692.67px" width="7" height="8" viewBox="0 0 7 8"><path d="M0.7 0.7 L5.8 4 L0.7 7.3Z" fill="#fff" stroke="#9a9a9a" stroke-width="1"/></svg>
<svg class="a" style="left:41px;top:686.67px" width="14" height="16" viewBox="0 0 14 16"><path d="M1.2 2 Q1.2 0.8 2.4 0.8 H11 Q12.3 0.8 12.3 2 V14.8 Q12.3 15.8 11 15.8 H2.4 Q1.2 15.8 1.2 14.8Z" fill="#ecd36c" stroke="#d6b74a" stroke-width="0.7"/><rect x="1.8" y="1.5" width="5" height="13.6" fill="#f8eca6"/><path d="M3.6 2 V9" stroke="#fff" stroke-width="1.3"/><path d="M7 1 V15.5" stroke="#d9bb55" stroke-width="0.9"/><rect x="7.5" y="1.5" width="4.3" height="13.6" fill="#f0da7c"/><rect x="12" y="7.8" width="1.6" height="6.5" fill="#e4c65a"/><rect x="11.9" y="9" width="1" height="2" fill="#e8f0f8"/><rect x="11.9" y="11" width="1" height="2.6" fill="#3a9be0"/></svg>
<div class="t" style="left:63.4px;top:688.67px;font-size:13px;color:#000">client_slides</div>
<svg class="a" style="left:25.5px;top:713.76px" width="7" height="8" viewBox="0 0 7 8"><path d="M0.7 0.7 L5.8 4 L0.7 7.3Z" fill="#fff" stroke="#9a9a9a" stroke-width="1"/></svg>
<svg class="a" style="left:41px;top:707.76px" width="14" height="16" viewBox="0 0 14 16"><path d="M1.2 2 Q1.2 0.8 2.4 0.8 H11 Q12.3 0.8 12.3 2 V14.8 Q12.3 15.8 11 15.8 H2.4 Q1.2 15.8 1.2 14.8Z" fill="#ecd36c" stroke="#d6b74a" stroke-width="0.7"/><rect x="1.8" y="1.5" width="5" height="13.6" fill="#f8eca6"/><path d="M3.6 2 V9" stroke="#fff" stroke-width="1.3"/><path d="M7 1 V15.5" stroke="#d9bb55" stroke-width="0.9"/><rect x="7.5" y="1.5" width="4.3" height="13.6" fill="#f0da7c"/><rect x="12" y="7.8" width="1.6" height="6.5" fill="#e4c65a"/><rect x="11.9" y="9" width="1" height="2" fill="#e8f0f8"/><rect x="11.9" y="11" width="1" height="2.6" fill="#3a9be0"/></svg>
<div class="t" style="left:63.4px;top:709.76px;font-size:13px;color:#000;letter-spacing:-0.275px">codec</div>
<svg class="a" style="left:25.5px;top:734.85px" width="7" height="8" viewBox="0 0 7 8"><path d="M0.7 0.7 L5.8 4 L0.7 7.3Z" fill="#fff" stroke="#9a9a9a" stroke-width="1"/></svg>
<svg class="a" style="left:41px;top:728.85px" width="14" height="16" viewBox="0 0 14 16"><path d="M1.2 2 Q1.2 0.8 2.4 0.8 H11 Q12.3 0.8 12.3 2 V14.8 Q12.3 15.8 11 15.8 H2.4 Q1.2 15.8 1.2 14.8Z" fill="#ecd36c" stroke="#d6b74a" stroke-width="0.7"/><rect x="1.8" y="1.5" width="5" height="13.6" fill="#f8eca6"/><path d="M3.6 2 V9" stroke="#fff" stroke-width="1.3"/><path d="M7 1 V15.5" stroke="#d9bb55" stroke-width="0.9"/><rect x="7.5" y="1.5" width="4.3" height="13.6" fill="#f0da7c"/><rect x="12" y="7.8" width="1.6" height="6.5" fill="#e4c65a"/><rect x="11.9" y="9" width="1" height="2" fill="#e8f0f8"/><rect x="11.9" y="11" width="1" height="2.6" fill="#3a9be0"/></svg>
<div class="t" style="left:63.4px;top:730.85px;font-size:13px;color:#000;letter-spacing:-0.475px">DICOM</div>
<svg class="a" style="left:25.5px;top:755.9399999999999px" width="7" height="8" viewBox="0 0 7 8"><path d="M0.7 0.7 L5.8 4 L0.7 7.3Z" fill="#fff" stroke="#9a9a9a" stroke-width="1"/></svg>
<svg class="a" style="left:41px;top:749.9399999999999px" width="14" height="16" viewBox="0 0 14 16"><path d="M1.2 2 Q1.2 0.8 2.4 0.8 H11 Q12.3 0.8 12.3 2 V14.8 Q12.3 15.8 11 15.8 H2.4 Q1.2 15.8 1.2 14.8Z" fill="#ecd36c" stroke="#d6b74a" stroke-width="0.7"/><rect x="1.8" y="1.5" width="5" height="13.6" fill="#f8eca6"/><path d="M3.6 2 V9" stroke="#fff" stroke-width="1.3"/><path d="M7 1 V15.5" stroke="#d9bb55" stroke-width="0.9"/><rect x="7.5" y="1.5" width="4.3" height="13.6" fill="#f0da7c"/><rect x="12" y="7.8" width="1.6" height="6.5" fill="#e4c65a"/><rect x="11.9" y="9" width="1" height="2" fill="#e8f0f8"/><rect x="11.9" y="11" width="1" height="2.6" fill="#3a9be0"/></svg>
<div class="t" style="left:63.4px;top:751.94px;font-size:13px;color:#000">dzi</div>
<svg class="a" style="left:25.5px;top:777.03px" width="7" height="8" viewBox="0 0 7 8"><path d="M0.7 0.7 L5.8 4 L0.7 7.3Z" fill="#fff" stroke="#9a9a9a" stroke-width="1"/></svg>
<svg class="a" style="left:41px;top:771.03px" width="14" height="16" viewBox="0 0 14 16"><path d="M1.2 2 Q1.2 0.8 2.4 0.8 H11 Q12.3 0.8 12.3 2 V14.8 Q12.3 15.8 11 15.8 H2.4 Q1.2 15.8 1.2 14.8Z" fill="#ecd36c" stroke="#d6b74a" stroke-width="0.7"/><rect x="1.8" y="1.5" width="5" height="13.6" fill="#f8eca6"/><path d="M3.6 2 V9" stroke="#fff" stroke-width="1.3"/><path d="M7 1 V15.5" stroke="#d9bb55" stroke-width="0.9"/><rect x="7.5" y="1.5" width="4.3" height="13.6" fill="#f0da7c"/><rect x="12" y="7.8" width="1.6" height="6.5" fill="#e4c65a"/><rect x="11.9" y="9" width="1" height="2" fill="#e8f0f8"/><rect x="11.9" y="11" width="1" height="2.6" fill="#3a9be0"/></svg>
<div class="t" style="left:63.4px;top:773.03px;font-size:13px;color:#000">dzi_test</div>
<svg class="a" style="left:25.5px;top:798.12px" width="7" height="8" viewBox="0 0 7 8"><path d="M0.7 0.7 L5.8 4 L0.7 7.3Z" fill="#fff" stroke="#9a9a9a" stroke-width="1"/></svg>
<svg class="a" style="left:41px;top:792.12px" width="14" height="16" viewBox="0 0 14 16"><path d="M1.2 2 Q1.2 0.8 2.4 0.8 H11 Q12.3 0.8 12.3 2 V14.8 Q12.3 15.8 11 15.8 H2.4 Q1.2 15.8 1.2 14.8Z" fill="#ecd36c" stroke="#d6b74a" stroke-width="0.7"/><rect x="1.8" y="1.5" width="5" height="13.6" fill="#f8eca6"/><path d="M3.6 2 V9" stroke="#fff" stroke-width="1.3"/><path d="M7 1 V15.5" stroke="#d9bb55" stroke-width="0.9"/><rect x="7.5" y="1.5" width="4.3" height="13.6" fill="#f0da7c"/><rect x="12" y="7.8" width="1.6" height="6.5" fill="#e4c65a"/><rect x="11.9" y="9" width="1" height="2" fill="#e8f0f8"/><rect x="11.9" y="11" width="1" height="2.6" fill="#3a9be0"/></svg>
<div class="t" style="left:63.4px;top:794.12px;font-size:13px;color:#000;letter-spacing:0.300px">fingerprint</div>
<svg class="a" style="left:25.5px;top:819.21px" width="7" height="8" viewBox="0 0 7 8"><path d="M0.7 0.7 L5.8 4 L0.7 7.3Z" fill="#fff" stroke="#9a9a9a" stroke-width="1"/></svg>
<svg class="a" style="left:41px;top:813.21px" width="14" height="16" viewBox="0 0 14 16"><path d="M1.2 2 Q1.2 0.8 2.4 0.8 H11 Q12.3 0.8 12.3 2 V14.8 Q12.3 15.8 11 15.8 H2.4 Q1.2 15.8 1.2 14.8Z" fill="#ecd36c" stroke="#d6b74a" stroke-width="0.7"/><rect x="1.8" y="1.5" width="5" height="13.6" fill="#f8eca6"/><path d="M3.6 2 V9" stroke="#fff" stroke-width="1.3"/><path d="M7 1 V15.5" stroke="#d9bb55" stroke-width="0.9"/><rect x="7.5" y="1.5" width="4.3" height="13.6" fill="#f0da7c"/><rect x="12" y="7.8" width="1.6" height="6.5" fill="#e4c65a"/><rect x="11.9" y="9" width="1" height="2" fill="#e8f0f8"/><rect x="11.9" y="11" width="1" height="2.6" fill="#3a9be0"/></svg>
<div class="t" style="left:63.4px;top:815.21px;font-size:13px;color:#000;letter-spacing:0.100px">fluo</div>
<svg class="a" style="left:25.5px;top:840.3px" width="7" height="8" viewBox="0 0 7 8"><path d="M0.7 0.7 L5.8 4 L0.7 7.3Z" fill="#fff" stroke="#9a9a9a" stroke-width="1"/></svg>
<svg class="a" style="left:41px;top:834.3px" width="14" height="16" viewBox="0 0 14 16"><path d="M1.2 2 Q1.2 0.8 2.4 0.8 H11 Q12.3 0.8 12.3 2 V14.8 Q12.3 15.8 11 15.8 H2.4 Q1.2 15.8 1.2 14.8Z" fill="#ecd36c" stroke="#d6b74a" stroke-width="0.7"/><rect x="1.8" y="1.5" width="5" height="13.6" fill="#f8eca6"/><path d="M3.6 2 V9" stroke="#fff" stroke-width="1.3"/><path d="M7 1 V15.5" stroke="#d9bb55" stroke-width="0.9"/><rect x="7.5" y="1.5" width="4.3" height="13.6" fill="#f0da7c"/><rect x="12" y="7.8" width="1.6" height="6.5" fill="#e4c65a"/><rect x="11.9" y="9" width="1" height="2" fill="#e8f0f8"/><rect x="11.9" y="11" width="1" height="2.6" fill="#3a9be0"/></svg>
<div class="t" style="left:63.4px;top:836.30px;font-size:13px;color:#000">histogenex</div>
<svg class="a" style="left:25.5px;top:861.39px" width="7" height="8" viewBox="0 0 7 8"><path d="M0.7 0.7 L5.8 4 L0.7 7.3Z" fill="#fff" stroke="#9a9a9a" stroke-width="1"/></svg>
<svg class="a" style="left:41px;top:855.39px" width="14" height="16" viewBox="0 0 14 16"><path d="M1.2 2 Q1.2 0.8 2.4 0.8 H11 Q12.3 0.8 12.3 2 V14.8 Q12.3 15.8 11 15.8 H2.4 Q1.2 15.8 1.2 14.8Z" fill="#ecd36c" stroke="#d6b74a" stroke-width="0.7"/><rect x="1.8" y="1.5" width="5" height="13.6" fill="#f8eca6"/><path d="M3.6 2 V9" stroke="#fff" stroke-width="1.3"/><path d="M7 1 V15.5" stroke="#d9bb55" stroke-width="0.9"/><rect x="7.5" y="1.5" width="4.3" height="13.6" fill="#f0da7c"/><rect x="12" y="7.8" width="1.6" height="6.5" fill="#e4c65a"/><rect x="11.9" y="9" width="1" height="2" fill="#e8f0f8"/><rect x="11.9" y="11" width="1" height="2.6" fill="#3a9be0"/></svg>
<div class="t" style="left:63.4px;top:857.39px;font-size:13px;color:#000;letter-spacing:0.153px">incomplete_formats</div>
<svg class="a" style="left:25.5px;top:882.48px" width="7" height="8" viewBox="0 0 7 8"><path d="M0.7 0.7 L5.8 4 L0.7 7.3Z" fill="#fff" stroke="#9a9a9a" stroke-width="1"/></svg>
<svg class="a" style="left:41px;top:876.48px" width="14" height="16" viewBox="0 0 14 16"><path d="M1.2 2 Q1.2 0.8 2.4 0.8 H11 Q12.3 0.8 12.3 2 V14.8 Q12.3 15.8 11 15.8 H2.4 Q1.2 15.8 1.2 14.8Z" fill="#ecd36c" stroke="#d6b74a" stroke-width="0.7"/><rect x="1.8" y="1.5" width="5" height="13.6" fill="#f8eca6"/><path d="M3.6 2 V9" stroke="#fff" stroke-width="1.3"/><path d="M7 1 V15.5" stroke="#d9bb55" stroke-width="0.9"/><rect x="7.5" y="1.5" width="4.3" height="13.6" fill="#f0da7c"/><rect x="12" y="7.8" width="1.6" height="6.5" fill="#e4c65a"/><rect x="11.9" y="9" width="1" height="2" fill="#e8f0f8"/><rect x="11.9" y="11" width="1" height="2.6" fill="#3a9be0"/></svg>
<div class="t" style="left:63.4px;top:878.48px;font-size:13px;color:#000">macro</div>
<svg class="a" style="left:25.5px;top:903.5699999999999px" width="7" height="8" viewBox="0 0 7 8"><path d="M0.7 0.7 L5.8 4 L0.7 7.3Z" fill="#fff" stroke="#9a9a9a" stroke-width="1"/></svg>
<svg class="a" style="left:41px;top:897.5699999999999px" width="14" height="16" viewBox="0 0 14 16"><path d="M1.2 2 Q1.2 0.8 2.4 0.8 H11 Q12.3 0.8 12.3 2 V14.8 Q12.3 15.8 11 15.8 H2.4 Q1.2 15.8 1.2 14.8Z" fill="#ecd36c" stroke="#d6b74a" stroke-width="0.7"/><rect x="1.8" y="1.5" width="5" height="13.6" fill="#f8eca6"/><path d="M3.6 2 V9" stroke="#fff" stroke-width="1.3"/><path d="M7 1 V15.5" stroke="#d9bb55" stroke-width="0.9"/><rect x="7.5" y="1.5" width="4.3" height="13.6" fill="#f0da7c"/><rect x="12" y="7.8" width="1.6" height="6.5" fill="#e4c65a"/><rect x="11.9" y="9" width="1" height="2" fill="#e8f0f8"/><rect x="11.9" y="11" width="1" height="2.6" fill="#3a9be0"/></svg>
<div class="t" style="left:63.4px;top:899.57px;font-size:13px;color:#000">mitosis_wsi</div>
<svg class="a" style="left:25.5px;top:924.66px" width="7" height="8" viewBox="0 0 7 8"><path d="M0.7 0.7 L5.8 4 L0.7 7.3Z" fill="#fff" stroke="#9a9a9a" stroke-width="1"/></svg>
<svg class="a" style="left:41px;top:918.66px" width="14" height="16" viewBox="0 0 14 16"><path d="M1.2 2 Q1.2 0.8 2.4 0.8 H11 Q12.3 0.8 12.3 2 V14.8 Q12.3 15.8 11 15.8 H2.4 Q1.2 15.8 1.2 14.8Z" fill="#ecd36c" stroke="#d6b74a" stroke-width="0.7"/><rect x="1.8" y="1.5" width="5" height="13.6" fill="#f8eca6"/><path d="M3.6 2 V9" stroke="#fff" stroke-width="1.3"/><path d="M7 1 V15.5" stroke="#d9bb55" stroke-width="0.9"/><rect x="7.5" y="1.5" width="4.3" height="13.6" fill="#f0da7c"/><rect x="12" y="7.8" width="1.6" height="6.5" fill="#e4c65a"/><rect x="11.9" y="9" width="1" height="2" fill="#e8f0f8"/><rect x="11.9" y="11" width="1" height="2.6" fill="#3a9be0"/></svg>
<div class="t" style="left:63.4px;top:920.66px;font-size:13px;color:#000">portal_slides</div>
<svg class="a" style="left:25.5px;top:945.75px" width="7" height="8" viewBox="0 0 7 8"><path d="M0.7 0.7 L5.8 4 L0.7 7.3Z" fill="#fff" stroke="#9a9a9a" stroke-width="1"/></svg>
<svg class="a" style="left:41px;top:939.75px" width="14" height="16" viewBox="0 0 14 16"><path d="M1.2 2 Q1.2 0.8 2.4 0.8 H11 Q12.3 0.8 12.3 2 V14.8 Q12.3 15.8 11 15.8 H2.4 Q1.2 15.8 1.2 14.8Z" fill="#ecd36c" stroke="#d6b74a" stroke-width="0.7"/><rect x="1.8" y="1.5" width="5" height="13.6" fill="#f8eca6"/><path d="M3.6 2 V9" stroke="#fff" stroke-width="1.3"/><path d="M7 1 V15.5" stroke="#d9bb55" stroke-width="0.9"/><rect x="7.5" y="1.5" width="4.3" height="13.6" fill="#f0da7c"/><rect x="12" y="7.8" width="1.6" height="6.5" fill="#e4c65a"/><rect x="11.9" y="9" width="1" height="2" fill="#e8f0f8"/><rect x="11.9" y="11" width="1" height="2.6" fill="#3a9be0"/></svg>
<!-- VIEWER -->
<div class="a" style="left:309px;top:115px;width:101px;height:21px;background:#e2e2e2;border:1px solid #cfcfcf;border-bottom:none"></div>
<div class="t" style="left:320.6px;top:118.75px;font-size:12px;color:#777">CMU-1.ndpi</div>
<svg class="a" style="left:393px;top:121.5px" width="9" height="9" viewBox="0 0 9 9"><path d="M0.8 0.8L8.2 8.2M8.2 0.8L0.8 8.2" stroke="#111" stroke-width="1.1"/></svg>
<svg class="a" style="left:1548px;top:119px" width="10" height="10" viewBox="0 0 10 10"><rect x="0.6" y="0.6" width="8" height="8.2" fill="none" stroke="#777" stroke-width="1.1"/><line x1="0.6" y1="1.5" x2="8.6" y2="1.5" stroke="#777" stroke-width="1.1"/></svg><svg class="a" style="left:1566px;top:119px" width="10" height="10" viewBox="0 0 10 10"><path d="M0.5 0.5L9 9M9 0.5L0.5 9" stroke="#777" stroke-width="0.9"/></svg>
<div class="a" style="left:309px;top:134px;width:273px;height:640px;border:1px solid #b4b4b4;background:#fff;width:1273px"></div>
<div class="a" style="left:310px;top:135px;width:1256px;height:22px;background:#d3d3d3"></div>
<div class="a" style="left:310px;top:135px;width:23px;height:638px;background:#d3d3d3;border-left:1px solid #a8a8a8"></div><div class="a" style="left:332px;top:135px;width:1px;height:22px;background:#aaa"></div>
<div class="a" style="left:310px;top:157px;width:23px;height:1px;background:#aaa"></div>
<div class="a" style="left:310px;top:134px;width:1272px;height:2px;border-top:1px solid #9a9a9a"></div>
<svg class="a" style="left:935.4px;top:137.8px" width="14" height="14" viewBox="0 0 14 14"><path d="M7 0 L14 7 L7 14 L0 7Z" fill="#6e6e6e"/><rect x="3.4" y="3.9" width="2.6" height="2.2" fill="#d8d8d8"/><rect x="8" y="3.9" width="2.6" height="2.2" fill="#d8d8d8"/><rect x="3.4" y="8" width="2.6" height="2.2" fill="#d8d8d8"/><rect x="8" y="8" width="2.6" height="2.2" fill="#d8d8d8"/></svg>
<div class="t" style="left:952px;top:139.1px;font-size:14px;color:#6a6a6a">A</div>
<svg class="a" style="left:314.3px;top:450px" width="14" height="14" viewBox="0 0 14 14"><path d="M7 0 L14 7 L7 14 L0 7Z" fill="#6e6e6e"/><rect x="3.4" y="3.9" width="2.6" height="2.2" fill="#d8d8d8"/><rect x="8" y="3.9" width="2.6" height="2.2" fill="#d8d8d8"/><rect x="3.4" y="8" width="2.6" height="2.2" fill="#d8d8d8"/><rect x="8" y="8" width="2.6" height="2.2" fill="#d8d8d8"/></svg>
<div class="t" style="left:318px;top:472px;font-size:12px;color:#707070">1</div>
<div class="a" style="left:332px;top:157px;width:1234px;height:616px;border:2px dashed #1f6fbf;border-bottom:none;border-right-width:2px"></div>
<div class="a" style="left:1566px;top:135px;width:15px;height:638px;background:#fbfbfb"></div>
<svg class="a" style="left:1569px;top:140px" width="10" height="7" viewBox="0 0 10 7"><path d="M0 6.5 L5 1 L10 6.5Z" fill="#777"/></svg>
<div class="a" style="left:1569px;top:153px;width:9.5px;height:596px;background:#8c8c8c;border-radius:5px"></div>
<svg class="a" style="left:1569px;top:760px" width="10" height="7" viewBox="0 0 10 7"><path d="M0 0.5 L5 6 L10 0.5Z" fill="#777"/></svg>
<div class="a" style="left:341px;top:166px;width:29px;height:49px;border:2px solid #ddd;border-radius:5px;background:#fff"></div>
<div class="a" style="left:346px;top:171px;width:19px;height:19px;border:1px solid #ccc;border-radius:2px;background:#fff"></div>
<div class="a" style="left:346px;top:191px;width:19px;height:19px;border:1px solid #ccc;border-radius:2px;background:#fff"></div>
<svg class="a" style="left:350px;top:174px" width="10" height="10" viewBox="0 0 10 10"><path d="M1 5H9M5 1V9" stroke="#3aa0da" stroke-width="2"/></svg>
<svg class="a" style="left:350px;top:196px" width="10" height="10" viewBox="0 0 10 10"><path d="M1 5H9" stroke="#3aa0da" stroke-width="2"/></svg>
<div class="a" style="left:346px;top:223px;width:18px;height:198px;border:2px solid #ddd;border-radius:9px;background:linear-gradient(90deg,#f4f4f4,#fff 40%,#fff 60%,#f0f0f0)"></div>
<div class="a" style="left:348px;top:225px;width:14px;height:51.5px;background:#62b7e0;border-radius:7px 7px 0 0"></div>
<div class="a" style="left:346px;top:383px;width:18px;height:18px;border-radius:50%;background:#7b97c2"></div>
<div class="a" style="left:365px;top:237px;width:5px;height:1.5px;background:#2a2a2a"></div>
<div class="t" style="left:375px;top:231.44px;font-size:12px;font-weight:bold;color:#333">80X</div>
<div class="a" style="left:365px;top:256px;width:5px;height:1.5px;background:#2a2a2a"></div>
<div class="t" style="left:375px;top:250.39px;font-size:12px;font-weight:bold;color:#333">40X</div>
<div class="a" style="left:365px;top:274px;width:5px;height:1.5px;background:#2a2a2a"></div>
<div class="t" style="left:375px;top:269.34px;font-size:12px;font-weight:bold;color:#333">20X</div>
<div class="a" style="left:365px;top:293px;width:5px;height:1.5px;background:#2a2a2a"></div>
<div class="t" style="left:375px;top:288.29px;font-size:12px;font-weight:bold;color:#333">10X</div>
<div class="a" style="left:365px;top:312px;width:5px;height:1.5px;background:#2a2a2a"></div>
<div class="t" style="left:375px;top:307.24px;font-size:12px;font-weight:bold;color:#333">5X</div>
<div class="a" style="left:365px;top:331px;width:5px;height:1.5px;background:#2a2a2a"></div>
<div class="t" style="left:375px;top:326.19px;font-size:12px;font-weight:bold;color:#333">2X</div>
<div class="a" style="left:365px;top:350px;width:5px;height:1.5px;background:#2a2a2a"></div>
<div class="t" style="left:375px;top:345.14px;font-size:12px;font-weight:bold;color:#333">1X</div>
<div class="a" style="left:365px;top:369px;width:5px;height:1.5px;background:#2a2a2a"></div>
<div class="a" style="left:365px;top:388px;width:5px;height:1.5px;background:#2a2a2a"></div>
<div class="a" style="left:365px;top:407px;width:5px;height:1.5px;background:#2a2a2a"></div>
<div class="a" style="left:453px;top:166px;width:123px;height:32px;border:2px solid #ddd;border-radius:5px;background:#fff"></div>
<div class="a" style="left:458px;top:171px;width:84px;height:24px;border:1px solid #c8c8c8;border-radius:3px;background:#fff"></div>
<div class="a" style="left:543px;top:171px;width:28px;height:22px;border:1px solid #c8c8c8;border-radius:3px;background:#fff"></div>
<div class="t" style="left:462.7px;top:176.15px;font-size:14px;color:#36a2d8">CMU-1.ndpi</div>
<div class="t" style="left:553px;top:175px;font-size:14px;font-weight:bold;color:#36a2d8">«</div>
<div class="a" style="left:1497px;top:166px;width:31px;height:29px;border:2px solid #ddd;border-radius:5px;background:#fff"></div><div class="a" style="left:1502px;top:171px;width:21px;height:19px;border:1px solid #ccc;border-radius:2px;background:#fff"></div>
<div class="a" style="left:1528px;top:166px;width:29px;height:29px;border:2px solid #ddd;border-radius:5px;background:#fff"></div><div class="a" style="left:1533px;top:171px;width:19px;height:19px;border:1px solid #ccc;border-radius:2px;background:#fff"></div>
<div class="t" style="left:1509.5px;top:172.5px;font-size:14px;font-weight:bold;color:#b5161c">x</div>
<svg class="a" style="left:1538px;top:172px" width="9" height="16" viewBox="0 0 9 16"><path d="M4.5 1.5V14.5M2 3.5L4.5 1L7 3.5M2 12.5L4.5 15L7 12.5" fill="none" stroke="#3aaee0" stroke-width="1.1"/></svg>
<div class="a" style="left:1528px;top:208px;width:29px;height:29px;border:2px solid #ddd;border-radius:5px;background:#fff"></div><div class="a" style="left:1533px;top:213px;width:19px;height:19px;border:1px solid #ccc;border-radius:2px;background:#fff"></div>
<div class="t" style="left:1538px;top:214px;font-size:14px;font-weight:bold;color:#36a2d8">»</div>
<div class="a" style="left:1528px;top:299px;width:29px;height:29px;border:2px solid #ddd;border-radius:5px;background:#fff"></div><div class="a" style="left:1533px;top:304px;width:19px;height:19px;border:1px solid #ccc;border-radius:2px;background:#fff"></div>
<div class="t" style="left:1538.5px;top:305px;font-size:14px;font-weight:bold;color:#36a2d8">«</div>
<div class="a" style="left:1527px;top:713px;width:29px;height:29px;border:2px solid #ddd;border-radius:5px;background:#fff"></div><div class="a" style="left:1532px;top:718px;width:19px;height:19px;border:1px solid #ccc;border-radius:2px;background:#fff"></div>
<div class="t" style="left:1537.5px;top:719.5px;font-size:14px;font-weight:bold;color:#36a2d8">«</div>
<div class="a" style="left:342px;top:703px;width:156px;height:38px;border:2px solid #ddd;border-radius:5px;background:#f7f7f7"></div>
<div class="t" style="left:391px;top:710.2px;font-size:14px;color:#333;-webkit-text-stroke:0.35px #333">5 mm</div>
<div class="a" style="left:347px;top:719px;width:2px;height:15px;background:#777"></div>
<div class="a" style="left:470px;top:719px;width:2px;height:15px;background:#777"></div>
<div class="a" style="left:347px;top:727px;width:125px;height:2px;background:#777"></div>
<div class="t" style="left:477.5px;top:714.5px;font-size:14px;font-weight:bold;color:#6b93c6">«</div>
<!-- VIEWER BOTTOM -->
<div class="a" style="left:333px;top:740px;width:1233px;height:33px;overflow:hidden">
<div class="a" style="left:2px;top:9px;width:35px;height:30px;border:1px solid #c8c8c8;border-radius:4px 4px 0 0;background:#fff"></div>
<div class="a" style="left:38px;top:9px;width:35px;height:30px;border:1px solid #c8c8c8;border-radius:4px 4px 0 0;background:#fff"></div>
<div class="a" style="left:74px;top:9px;width:35px;height:30px;border:1px solid #c8c8c8;border-radius:4px 4px 0 0;background:#fff"></div>
<div class="a" style="left:110px;top:9px;width:35px;height:30px;border:1px solid #c8c8c8;border-radius:4px 4px 0 0;background:#fff"></div>
<div class="a" style="left:146px;top:9px;width:35px;height:30px;border:1px solid #c8c8c8;border-radius:4px 4px 0 0;background:#fff"></div>
<svg class="a" style="left:2px;top:8px" width="36" height="26" viewBox="0 0 36 26"><path d="M9.2 10.8 A7.6 7.6 0 0 1 23.6 7.6" fill="none" stroke="#000" stroke-width="1.3"/><path d="M21.8 6.2 L26.6 5.8 L25.6 11Z" fill="#000"/><path d="M6.1 11.4 V25 L15.6 18.4Z" fill="#fff" stroke="#000" stroke-width="1.2" stroke-linejoin="round"/><path d="M27.9 11.4 V25 L18 18.4Z" fill="#000"/></svg><svg class="a" style="left:38px;top:8px" width="36" height="26" viewBox="0 0 36 26"><path d="M13.2 3.8 H28.8 L20.8 14.2Z" fill="#000"/><path d="M20.8 14.2 L13.7 25.5 M20.8 14.2 L27.9 25.5" stroke="#000" stroke-width="1.2"/><path d="M13.8 22.5 A8.2 8.2 0 0 1 10.6 8.2" fill="none" stroke="#000" stroke-width="1.3"/><path d="M8.6 8.4 L14 5.6 L13 11Z" fill="#000"/></svg><svg class="a" style="left:74px;top:8px" width="36" height="26" viewBox="0 0 36 26"><path d="M10.6 11.2 A9.6 9.6 0 1 1 13.6 22.4" fill="none" stroke="#000" stroke-width="1.3"/><path d="M5.6 11.2 H14.2 L9.8 16Z" fill="#000"/></svg><svg class="a" style="left:110px;top:8px" width="36" height="26" viewBox="0 0 36 26"><path d="M23.7 11.2 A9.6 9.6 0 1 0 20.7 22.4" fill="none" stroke="#000" stroke-width="1.3"/><path d="M20.1 11.2 H28.7 L24.5 16Z" fill="#000"/></svg><svg class="a" style="left:146px;top:8px" width="36" height="26" viewBox="0 0 36 26"><path d="M12.6 8.2 A9.2 9.2 0 0 0 15.8 25" fill="none" stroke="#000" stroke-width="1.3"/><path d="M11.4 3.6 L17 7.6 L13.4 11.2 L11.8 9Z" fill="#000"/><path d="M21.4 9 A9.2 9.2 0 0 1 21.6 24" fill="none" stroke="#000" stroke-width="1.2" stroke-dasharray="1 1.6"/></svg>
<div class="a" style="left:378px;top:9px;width:36px;height:30px;border:1px solid #c8c8c8;border-radius:4px 4px 0 0;background:#fff"></div>
<div class="a" style="left:414px;top:9px;width:36px;height:30px;border:1px solid #c8c8c8;border-radius:4px 4px 0 0;background:#fff"></div>
<svg class="a" style="left:389px;top:11px" width="16" height="24" viewBox="0 0 16 24"><path d="M13.5 2.5 V21.5 L1 12Z" fill="none" stroke="#111" stroke-width="1.8" stroke-linejoin="round"/></svg>
<svg class="a" style="left:424px;top:11px" width="16" height="24" viewBox="0 0 16 24"><path d="M2.5 2.5 V21.5 L15 12Z" fill="none" stroke="#111" stroke-width="1.8" stroke-linejoin="round"/></svg>
<div class="a" style="left:648px;top:9px;width:31px;height:30px;border:1px solid #c8c8c8;border-radius:4px 4px 0 0;background:#fff"></div>
<div class="t" style="left:648px;top:16.64px;width:31px;text-align:center;font-size:12px;color:#222">Min</div>
<div class="a" style="left:679px;top:9px;width:27px;height:30px;border:1px solid #c8c8c8;border-radius:4px 4px 0 0;background:#fff"></div>
<div class="t" style="left:679px;top:16.64px;width:27px;text-align:center;font-size:12px;color:#222">1X</div>
<div class="a" style="left:706px;top:9px;width:26px;height:30px;border:1px solid #c8c8c8;border-radius:4px 4px 0 0;background:#fff"></div>
<div class="t" style="left:706px;top:16.64px;width:26px;text-align:center;font-size:12px;color:#222">2X</div>
<div class="a" style="left:732px;top:9px;width:27px;height:30px;border:1px solid #c8c8c8;border-radius:4px 4px 0 0;background:#fff"></div>
<div class="t" style="left:732px;top:16.64px;width:27px;text-align:center;font-size:12px;color:#222">5X</div>
<div class="a" style="left:759px;top:9px;width:33px;height:30px;border:1px solid #c8c8c8;border-radius:4px 4px 0 0;background:#fff"></div>
<div class="t" style="left:759px;top:16.64px;width:33px;text-align:center;font-size:12px;color:#222">10X</div>
<div class="a" style="left:792px;top:9px;width:33px;height:30px;border:1px solid #c8c8c8;border-radius:4px 4px 0 0;background:#fff"></div>
<div class="t" style="left:792px;top:16.64px;width:33px;text-align:center;font-size:12px;color:#222">20X</div>
<div class="a" style="left:826px;top:9px;width:33px;height:30px;border:1px solid #c8c8c8;border-radius:4px 4px 0 0;background:#fff"></div>
<div class="t" style="left:826px;top:16.64px;width:33px;text-align:center;font-size:12px;color:#222">30X</div>
<div class="a" style="left:859px;top:9px;width:34px;height:30px;border:1px solid #c8c8c8;border-radius:4px 4px 0 0;background:#fff"></div>
<div class="t" style="left:859px;top:16.64px;width:34px;text-align:center;font-size:12px;color:#222">40X</div>
<div class="a" style="left:893px;top:9px;width:33px;height:30px;border:1px solid #c8c8c8;border-radius:4px 4px 0 0;background:#fff"></div>
<div class="t" style="left:893px;top:16.64px;width:33px;text-align:center;font-size:12px;color:#222">50X</div>
<div class="a" style="left:926px;top:9px;width:33px;height:30px;border:1px solid #c8c8c8;border-radius:4px 4px 0 0;background:#fff"></div>
<div class="t" style="left:926px;top:16.64px;width:33px;text-align:center;font-size:12px;color:#222">60X</div>
<div class="a" style="left:960px;top:9px;width:33px;height:30px;border:1px solid #c8c8c8;border-radius:4px 4px 0 0;background:#fff"></div>
<div class="t" style="left:960px;top:16.64px;width:33px;text-align:center;font-size:12px;color:#222">70X</div>
<div class="a" style="left:994px;top:9px;width:27px;height:30px;border:1px solid #c8c8c8;border-radius:4px 4px 0 0;background:#fff"></div>
<div class="t" style="left:994px;top:16.64px;width:27px;text-align:center;font-size:12px;color:#222">1:1</div>
<div class="a" style="left:1022px;top:9px;width:34px;height:30px;border:1px solid #c8c8c8;border-radius:4px 4px 0 0;background:#fff"></div>
<div class="t" style="left:1022px;top:16.64px;width:34px;text-align:center;font-size:12px;color:#222">Max</div>
<div class="a" style="left:1057px;top:9px;width:15px;height:30px;border:1px solid #c8c8c8;border-radius:4px 4px 0 0;background:#fff"></div>
<div class="t" style="left:1057px;top:16.64px;width:15px;text-align:center;font-size:12px;color:#222">-</div>
<div class="a" style="left:1073px;top:9.5px;width:99px;height:21px;border:1px solid #c8c8c8;border-radius:4px;background:#fff;overflow:hidden"><div class="a" style="left:0;top:7px;width:99px;height:5px;background:#d0d0d0"></div><div class="a" style="left:76px;top:0;width:22px;height:21px;background:#a9d5e5"></div><div class="a" style="left:10px;top:0;width:9px;height:20px;background:#e8e8e8;border:1px solid #d4d4d4;border-radius:2px"></div></div>
<div class="a" style="left:1173px;top:9px;width:18px;height:30px;border:1px solid #c8c8c8;border-radius:4px 4px 0 0;background:#fff"></div>
<div class="t" style="left:1173px;top:16.64px;width:18px;text-align:center;font-size:12px;color:#222">+</div>
<div class="a" style="left:1191px;top:9.5px;width:40px;height:21px;border:1px solid #c8c8c8;border-radius:4px;background:#fff"></div>
<div class="t" style="left:1199px;top:12.5px;font-size:14px;color:#555">0</div>
</div>
<!-- TRAY -->
<div class="a" style="left:309px;top:773px;width:1273px;height:1px;background:#b4b4b4"></div>
<div class="a" style="left:309px;top:780px;width:61px;height:20px;background:#e2e2e2;border:1px solid #cfcfcf;border-bottom:none"></div>
<div class="t" style="left:320px;top:784.2px;font-size:12px;color:#777">Tray</div>
<svg class="a" style="left:353.5px;top:786px" width="9" height="9" viewBox="0 0 9 9"><path d="M0.8 0.8L8.2 8.2M8.2 0.8L0.8 8.2" stroke="#111" stroke-width="1.1"/></svg>
<svg class="a" style="left:1548px;top:784px" width="10" height="10" viewBox="0 0 10 10"><rect x="0.6" y="0.6" width="8" height="8.2" fill="none" stroke="#777" stroke-width="1.1"/><line x1="0.6" y1="1.5" x2="8.6" y2="1.5" stroke="#777" stroke-width="1.1"/></svg><svg class="a" style="left:1566px;top:784px" width="10" height="10" viewBox="0 0 10 10"><path d="M0.5 0.5L9 9M9 0.5L0.5 9" stroke="#777" stroke-width="0.9"/></svg>
<div class="a" style="left:309px;top:799px;width:1273px;height:160px;background:#fff;border:1px solid #c8c8c8"></div>
<div class="a" style="left:310px;top:801px;width:633px;height:22px;border:1px solid #ccc;border-radius:4px;background:#fff"></div>
<div class="a" style="left:335px;top:802px;width:1px;height:20px;background:#ccc"></div>
<div class="a" style="left:391px;top:802px;width:1px;height:20px;background:#ccc"></div>
<div class="a" style="left:494px;top:802px;width:1px;height:20px;background:#ccc"></div>
<div class="a" style="left:534px;top:802px;width:1px;height:20px;background:#ccc"></div>
<div class="a" style="left:610px;top:802px;width:1px;height:20px;background:#ccc"></div>
<div class="a" style="left:690px;top:802px;width:1px;height:20px;background:#ccc"></div>
<div class="a" style="left:777px;top:802px;width:1px;height:20px;background:#ccc"></div>
<div class="a" style="left:877px;top:802px;width:1px;height:20px;background:#ccc"></div>
<svg class="a" style="left:317px;top:806px" width="12" height="12" viewBox="0 0 12 12"><g fill="#4a64c8"><rect x="0.5" y="0.5" width="2.5" height="2.5"/><rect x="4.75" y="0.5" width="2.5" height="2.5"/><rect x="9" y="0.5" width="2.5" height="2.5"/><rect x="0.5" y="4.75" width="2.5" height="2.5"/><rect x="4.75" y="4.75" width="2.5" height="2.5"/><rect x="9" y="4.75" width="2.5" height="2.5"/><rect x="0.5" y="9" width="2.5" height="2.5"/><rect x="4.75" y="9" width="2.5" height="2.5"/><rect x="9" y="9" width="2.5" height="2.5"/></g></svg>
<div class="t" style="left:341px;top:805.84px;font-size:12px;color:#222">Select</div>
<div class="caret" style="left:378px;top:810px"></div>
<div class="t" style="left:397px;top:805.84px;font-size:12px;color:#999">Remove selected</div>
<div class="t" style="left:501px;top:805.84px;font-size:12px;color:#222">Clear</div>
<div class="t" style="left:540.5px;top:805.84px;font-size:12px;color:#999">Open in grid</div>
<div class="t" style="left:617px;top:805.84px;font-size:12px;color:#999">Open in tabs</div>
<div class="t" style="left:696px;top:805.84px;font-size:12px;color:#222">Export to CSV</div>
<div class="t" style="left:783px;top:805.84px;font-size:12px;color:#222">Import from CSV</div>
<div class="t" style="left:883px;top:805.84px;font-size:12px;color:#222">Save Tray</div>
<div class="a" style="left:315px;top:828px;width:631px;height:130px;border:1px solid #c8c8c8;background:#fff"></div>
<div class="a" style="left:945px;top:828px;width:631px;height:130px;border:1px solid #c8c8c8;background:#fff"></div>
<div class="a" style="left:1581px;top:799px;width:1px;height:144px;background:#c8c8c8"></div>
<svg class="a" style="left:600px;top:885px" width="40" height="30" viewBox="0 0 40 30"><g fill="#cf8ad0"><ellipse cx="10.5" cy="15.5" rx="2.4" ry="5" transform="rotate(40 10.5 15.5)"/><ellipse cx="16.5" cy="19.5" rx="2" ry="4" transform="rotate(35 16.5 19.5)"/><ellipse cx="24.5" cy="10" rx="2.3" ry="5.5" transform="rotate(-25 24.5 10)"/><ellipse cx="29.5" cy="9.5" rx="2" ry="4" transform="rotate(-40 29.5 9.5)"/></g></svg>
<!-- TRAY THUMB -->
<svg class="a" style="left:1191px;top:868px" width="140" height="71" viewBox="0 0 100 50" preserveAspectRatio="none"><defs><radialGradient id="og1" cx="0.45" cy="0.55" r="0.75"><stop offset="0" stop-color="#f3f3f3"/><stop offset="0.65" stop-color="#e8e8e8"/><stop offset="1" stop-color="#cdcdcd"/></radialGradient></defs><rect width="100" height="50" fill="url(#og1)"/><rect x="0" y="0" width="100" height="2" fill="#d0d0d0"/><ellipse cx="9" cy="0" rx="8" ry="3" fill="#000"/><rect x="94" y="0" width="6" height="7" fill="#000"/><rect x="94" y="43" width="6" height="7" fill="#000"/><rect x="98" y="21" width="2" height="6" fill="#000"/><g fill="#a2a2a2" stroke="#7c7c7c" stroke-width="0.7"><ellipse cx="21" cy="25" rx="3" ry="7.5" transform="rotate(40 21 25)"/><ellipse cx="28" cy="30" rx="2.5" ry="5.5" transform="rotate(35 28 30)"/><ellipse cx="44" cy="14" rx="3" ry="7.5" transform="rotate(-22 44 14)"/><ellipse cx="51.5" cy="11.5" rx="2.4" ry="5" transform="rotate(-35 51.5 11.5)"/></g></svg>
<!-- INFO -->
<div class="a" style="left:1587px;top:115px;width:57px;height:20px;background:#e2e2e2;border:1px solid #cfcfcf;border-bottom:none"></div>
<div class="t" style="left:1598.5px;top:118.75px;font-size:12px;color:#777">Info</div>
<svg class="a" style="left:1627.5px;top:121.5px" width="9" height="9" viewBox="0 0 9 9"><path d="M0.8 0.8L8.2 8.2M8.2 0.8L0.8 8.2" stroke="#111" stroke-width="1.1"/></svg>
<svg class="a" style="left:1871px;top:119px" width="10" height="10" viewBox="0 0 10 10"><rect x="0.6" y="0.6" width="8" height="8.2" fill="none" stroke="#777" stroke-width="1.1"/><line x1="0.6" y1="1.5" x2="8.6" y2="1.5" stroke="#777" stroke-width="1.1"/></svg><svg class="a" style="left:1889px;top:119px" width="10" height="10" viewBox="0 0 10 10"><path d="M0.5 0.5L9 9M9 0.5L0.5 9" stroke="#777" stroke-width="0.9"/></svg>
<div class="a" style="left:1588px;top:134px;width:330px;height:820px;background:#fff;border:1px solid #c8c8c8"></div>
<div class="a" style="left:1589px;top:136.00px;width:313px;height:26.71px;background:#f9f9f9"></div>
<div class="a" style="left:1589px;top:161.71px;width:313px;height:1px;background:#ddd"></div>
<div class="a" style="left:1594.5px;top:141.00px;font-size:11px;line-height:15.71px;font-weight:bold;color:#333;white-space:nowrap">File name</div>
<div class="a" style="left:1725.5px;top:141.00px;font-size:11px;line-height:15.71px;color:#333;white-space:nowrap">_sys_ref/annotations/CMU-1.ndpi</div>
<div class="a" style="left:1589px;top:162.71px;width:313px;height:26.71px;background:#fff"></div>
<div class="a" style="left:1589px;top:188.42px;width:313px;height:1px;background:#ddd"></div>
<div class="a" style="left:1594.5px;top:167.71px;font-size:11px;line-height:15.71px;font-weight:bold;color:#333;white-space:nowrap">Last Modified</div>
<div class="a" style="left:1725.5px;top:167.71px;font-size:11px;line-height:15.71px;color:#333;white-space:nowrap">Apr 21 2023 16:21</div>
<div class="a" style="left:1589px;top:189.42px;width:313px;height:26.71px;background:#f9f9f9"></div>
<div class="a" style="left:1589px;top:215.13px;width:313px;height:1px;background:#ddd"></div>
<div class="a" style="left:1594.5px;top:194.42px;font-size:11px;line-height:15.71px;font-weight:bold;color:#333;white-space:nowrap">Width</div>
<div class="a" style="left:1725.5px;top:194.42px;font-size:11px;line-height:15.71px;color:#333;white-space:nowrap">51,200 pixels / 23.368 mm</div>
<div class="a" style="left:1589px;top:216.13px;width:313px;height:26.71px;background:#fff"></div>
<div class="a" style="left:1589px;top:241.84px;width:313px;height:1px;background:#ddd"></div>
<div class="a" style="left:1594.5px;top:221.13px;font-size:11px;line-height:15.71px;font-weight:bold;color:#333;white-space:nowrap">Height</div>
<div class="a" style="left:1725.5px;top:221.13px;font-size:11px;line-height:15.71px;color:#333;white-space:nowrap">38,144 pixels / 17.358 mm</div>
<div class="a" style="left:1589px;top:242.84px;width:313px;height:26.71px;background:#f9f9f9"></div>
<div class="a" style="left:1589px;top:268.55px;width:313px;height:1px;background:#ddd"></div>
<div class="a" style="left:1594.5px;top:247.84px;font-size:11px;line-height:15.71px;font-weight:bold;color:#333;white-space:nowrap">Aparent Magnification</div>
<div class="a" style="left:1725.5px;top:247.84px;font-size:11px;line-height:15.71px;color:#333;white-space:nowrap">1X</div>
<div class="a" style="left:1589px;top:269.55px;width:313px;height:42.43px;background:#fff"></div>
<div class="a" style="left:1589px;top:310.98px;width:313px;height:1px;background:#ddd"></div>
<div class="a" style="left:1594.5px;top:274.55px;font-size:11px;line-height:15.71px;font-weight:bold;color:#333;white-space:nowrap">Micrometres Per Pixel<br>X</div>
<div class="a" style="left:1725.5px;top:274.55px;font-size:11px;line-height:15.71px;color:#333;white-space:nowrap">0.45641259698767683</div>
<div class="a" style="left:1589px;top:311.98px;width:313px;height:42.43px;background:#f9f9f9"></div>
<div class="a" style="left:1589px;top:353.41px;width:313px;height:1px;background:#ddd"></div>
<div class="a" style="left:1594.5px;top:316.98px;font-size:11px;line-height:15.71px;font-weight:bold;color:#333;white-space:nowrap">Micrometres Per Pixel<br>Y</div>
<div class="a" style="left:1725.5px;top:316.98px;font-size:11px;line-height:15.71px;color:#333;white-space:nowrap">0.45506257110352677</div>
<div class="a" style="left:1589px;top:354.41px;width:313px;height:26.71px;background:#fff"></div>
<div class="a" style="left:1589px;top:380.12px;width:313px;height:1px;background:#ddd"></div>
<div class="a" style="left:1594.5px;top:359.41px;font-size:11px;line-height:15.71px;font-weight:bold;color:#333;white-space:nowrap">Physical Size</div>
<div class="a" style="left:1725.5px;top:359.41px;font-size:11px;line-height:15.71px;color:#333;white-space:nowrap">198.03 MB</div>
<div class="a" style="left:1589px;top:381.12px;width:313px;height:26.71px;background:#f9f9f9"></div>
<div class="a" style="left:1589px;top:406.83px;width:313px;height:1px;background:#ddd"></div>
<div class="a" style="left:1594.5px;top:386.12px;font-size:11px;line-height:15.71px;font-weight:bold;color:#333;white-space:nowrap">Tile Size</div>
<div class="a" style="left:1725.5px;top:386.12px;font-size:11px;line-height:15.71px;color:#333;white-space:nowrap">512 x 512 pixels</div>
<div class="a" style="left:1589px;top:407.83px;width:313px;height:61.00px;background:#fff"></div>
<div class="a" style="left:1589px;top:467.83px;width:313px;height:1px;background:#ddd"></div>
<div class="a" style="left:1594.5px;top:412.83px;font-size:11px;line-height:15.71px;font-weight:bold;color:#333;white-space:nowrap">Barcode</div>
<div class="a" style="left:1589px;top:468.83px;width:313px;height:26.71px;background:#f9f9f9"></div>
<div class="a" style="left:1589px;top:494.54px;width:313px;height:1px;background:#ddd"></div>
<div class="a" style="left:1594.5px;top:473.83px;font-size:11px;line-height:15.71px;font-weight:bold;color:#333;white-space:nowrap">Barcode text</div>
<div class="a" style="left:1589px;top:495.54px;width:313px;height:61.00px;background:#fff"></div>
<div class="a" style="left:1589px;top:555.54px;width:313px;height:1px;background:#ddd"></div>
<div class="a" style="left:1594.5px;top:500.54px;font-size:11px;line-height:15.71px;font-weight:bold;color:#333;white-space:nowrap">Overview</div>
<div class="a" style="left:1589px;top:556.54px;width:313px;height:86.00px;background:#f9f9f9"></div>
<div class="a" style="left:1589px;top:641.54px;width:313px;height:1px;background:#ddd"></div>
<div class="a" style="left:1594.5px;top:561.54px;font-size:11px;line-height:15.71px;font-weight:bold;color:#333;white-space:nowrap">Macro</div>
<div class="a" style="left:1589px;top:642.54px;width:313px;height:26.71px;background:#fff"></div>
<div class="a" style="left:1589px;top:668.25px;width:313px;height:1px;background:#ddd"></div>
<div class="a" style="left:1594.5px;top:647.54px;font-size:11px;line-height:15.71px;font-weight:bold;color:#333;white-space:nowrap">Layers</div>
<div class="a" style="left:1725.5px;top:647.54px;font-size:11px;line-height:15.71px;color:#333;white-space:nowrap">1</div>
<div class="a" style="left:1589px;top:669.25px;width:313px;height:26.71px;background:#f9f9f9"></div>
<div class="a" style="left:1589px;top:694.96px;width:313px;height:1px;background:#ddd"></div>
<div class="a" style="left:1594.5px;top:674.25px;font-size:11px;line-height:15.71px;font-weight:bold;color:#333;white-space:nowrap">Channels</div>
<div class="a" style="left:1725.5px;top:674.25px;font-size:11px;line-height:15.71px;color:#333;white-space:nowrap">1</div>
<div class="a" style="left:1589px;top:695.96px;width:313px;height:26.71px;background:#fff"></div>
<div class="a" style="left:1589px;top:721.67px;width:313px;height:1px;background:#ddd"></div>
<div class="a" style="left:1594.5px;top:700.96px;font-size:11px;line-height:15.71px;font-weight:bold;color:#333;white-space:nowrap">Compression</div>
<div class="a" style="left:1725.5px;top:700.96px;font-size:11px;line-height:15.71px;color:#333;white-space:nowrap">JpegTechnote2</div>
<div class="a" style="left:1589px;top:722.67px;width:313px;height:26.71px;background:#f9f9f9"></div>
<div class="a" style="left:1589px;top:748.38px;width:313px;height:1px;background:#ddd"></div>
<div class="a" style="left:1594.5px;top:727.67px;font-size:11px;line-height:15.71px;font-weight:bold;color:#333;white-space:nowrap">File Format</div>
<div class="a" style="left:1725.5px;top:727.67px;font-size:11px;line-height:15.71px;color:#333;white-space:nowrap">Hamamatsu NDPI</div>
<div class="a" style="left:1589px;top:749.38px;width:313px;height:42.43px;background:#fff"></div>
<div class="a" style="left:1589px;top:790.81px;width:313px;height:1px;background:#ddd"></div>
<div class="a" style="left:1594.5px;top:754.38px;font-size:11px;line-height:15.71px;font-weight:bold;color:#333;white-space:nowrap">Objective (nominal)<br>magnification</div>
<div class="a" style="left:1725.5px;top:754.38px;font-size:11px;line-height:15.71px;color:#333;white-space:nowrap">20</div>
<div class="a" style="left:1589px;top:135px;width:313px;height:1px;background:#ddd"></div>
<div class="a" style="left:1719px;top:135px;width:1px;height:655.81px;background:#ddd"></div>
<div class="a" style="left:1588px;top:135px;width:1px;height:808px;background:#c8c8c8"></div>
<div class="a" style="left:1899px;top:135px;width:4px;height:808px;background:linear-gradient(90deg,rgba(0,0,0,0),rgba(0,0,0,0.12))"></div>
<svg class="a" style="left:1725px;top:413px" width="48" height="50" viewBox="0 0 48 50" preserveAspectRatio="none"><defs><linearGradient id="lb" x1="0" y1="0" x2="1" y2="1"><stop offset="0" stop-color="#a4a4a4"/><stop offset="0.5" stop-color="#929292"/><stop offset="1" stop-color="#b0b0b0"/></linearGradient></defs><rect width="48" height="50" fill="#b0b0b0"/><rect x="0" y="0" width="40" height="3" fill="#111"/><rect x="0" y="3" width="40" height="45" fill="url(#lb)"/><rect x="40" y="5" width="5" height="42" fill="#0a0a0a"/><rect x="38" y="46" width="3" height="4" fill="#111"/><text x="0" y="0" transform="translate(24.5 44) rotate(-90)" font-family="Liberation Sans" font-weight="bold" font-size="11" fill="#1a1a1a">CMU-1</text></svg>
<svg class="a" style="left:1725px;top:501px" width="99" height="50" viewBox="0 0 100 50" preserveAspectRatio="none"><defs><radialGradient id="og2" cx="0.45" cy="0.55" r="0.75"><stop offset="0" stop-color="#f3f3f3"/><stop offset="0.65" stop-color="#e8e8e8"/><stop offset="1" stop-color="#cdcdcd"/></radialGradient></defs><rect width="100" height="50" fill="url(#og2)"/><rect x="0" y="0" width="100" height="2" fill="#d0d0d0"/><ellipse cx="9" cy="0" rx="8" ry="3" fill="#000"/><rect x="94" y="0" width="6" height="7" fill="#000"/><rect x="94" y="43" width="6" height="7" fill="#000"/><rect x="98" y="21" width="2" height="6" fill="#000"/><g fill="#a2a2a2" stroke="#7c7c7c" stroke-width="0.7"><ellipse cx="21" cy="25" rx="3" ry="7.5" transform="rotate(40 21 25)"/><ellipse cx="28" cy="30" rx="2.5" ry="5.5" transform="rotate(35 28 30)"/><ellipse cx="44" cy="14" rx="3" ry="7.5" transform="rotate(-22 44 14)"/><ellipse cx="51.5" cy="11.5" rx="2.4" ry="5" transform="rotate(-35 51.5 11.5)"/></g></svg>
<svg class="a" style="left:1725px;top:562px" width="173" height="75" viewBox="0 0 173 75"><defs><linearGradient id="mlb" x1="0" y1="0" x2="1" y2="1"><stop offset="0" stop-color="#a6a6a6"/><stop offset="0.5" stop-color="#949494"/><stop offset="1" stop-color="#b2b2b2"/></linearGradient><radialGradient id="mog" cx="0.45" cy="0.55" r="0.75"><stop offset="0" stop-color="#f3f3f3"/><stop offset="0.65" stop-color="#e8e8e8"/><stop offset="1" stop-color="#cdcdcd"/></radialGradient></defs><rect width="173" height="75" fill="url(#mog)"/><rect x="0" y="0" width="48" height="75" fill="url(#mlb)"/><rect x="0" y="0" width="48" height="4" fill="#111"/><rect x="48" y="5" width="5" height="66" fill="#0a0a0a"/><rect x="46" y="70" width="4" height="5" fill="#111"/><text x="0" y="0" transform="translate(33 62) rotate(-90)" font-family="Liberation Sans" font-weight="bold" font-size="16" fill="#1a1a1a">CMU-1</text><ellipse cx="62" cy="0" rx="9" ry="3" fill="#000"/><rect x="167" y="0" width="6" height="8" fill="#000"/><rect x="167" y="64" width="6" height="11" fill="#000"/><rect x="171" y="30" width="2" height="8" fill="#000"/><g fill="#a2a2a2" stroke="#7c7c7c" stroke-width="0.7"><ellipse cx="84" cy="38" rx="4" ry="10.5" transform="rotate(35 84 38)"/><ellipse cx="94" cy="45" rx="3.5" ry="8" transform="rotate(30 94 45)"/><ellipse cx="109" cy="20" rx="4" ry="11" transform="rotate(-18 109 20)"/><ellipse cx="119" cy="16" rx="3.2" ry="7" transform="rotate(-30 119 16)"/></g></svg>
<div class="a" style="left:1865px;top:407px;width:45px;height:119px;background:#fff;border:1px solid #ddd;border-radius:5px 0 0 5px"></div>
<div class="t" style="left:1884px;top:466px;font-size:12px;font-weight:bold;color:#777;transform:translate(-50%,-50%) rotate(-90deg);">AI Analysis</div>
<div class="a" style="left:1760px;top:847px;width:120px;height:30px;border:1px solid #ccc;background:#fff"></div>
<div class="t" style="left:1760px;top:854.54px;width:120px;text-align:center;font-size:12px;font-weight:bold;color:#777">AI Tasks 0 / 0</div>
<!-- SLIDE -->
<svg class="a" style="left:666px;top:255px" width="584" height="434" viewBox="0 0 584 434"><defs><radialGradient id="tg" cx="0.5" cy="0.5" r="0.6"><stop offset="0" stop-color="#dcaad4"/><stop offset="0.65" stop-color="#cf97c8"/><stop offset="1" stop-color="#b788c0"/></radialGradient></defs><rect width="584" height="434" fill="#e4ded7"/><path d="M184.4 193.0C181.6 190.0 172.9 184.9 166.6 182.8C160.2 180.7 153.5 179.7 146.3 180.3C139.1 180.9 131.5 183.7 123.4 186.6C115.4 189.5 105.6 193.6 98.0 198.0C90.4 202.4 84.0 207.4 77.6 213.3C71.2 219.2 65.3 226.5 59.8 233.7C54.3 240.9 48.7 249.0 44.5 256.6C40.3 264.2 36.9 271.9 34.4 279.5C31.9 287.1 29.9 295.2 29.3 302.4C28.7 309.6 28.8 316.3 30.5 322.7C32.2 329.1 34.9 335.6 39.4 340.5C43.9 345.4 51.3 350.7 57.2 352.0C63.1 353.3 69.7 351.0 75.0 348.2C80.3 345.4 85.6 340.9 89.0 335.4C92.4 329.9 93.1 320.9 95.4 315.0C97.7 309.1 99.6 304.9 103.0 299.8C106.4 294.7 111.5 290.5 115.8 284.6C120.0 278.7 124.3 271.0 128.5 264.2C132.7 257.4 136.5 249.0 141.2 243.9C145.9 238.8 151.4 238.4 156.5 233.7C161.6 229.0 167.2 221.4 171.7 215.9C176.1 210.4 181.1 204.4 183.2 200.6C185.3 196.8 187.2 196.0 184.4 193.0Z" fill="url(#tg)" stroke="#9574b4" stroke-width="2.4"/><path d="M259.5 271.8C257.0 268.4 249.2 263.6 243.0 261.7C236.8 259.8 229.4 259.5 222.6 260.4C215.8 261.2 208.6 263.2 202.2 266.8C195.8 270.4 189.9 276.1 184.4 282.0C178.9 287.9 173.8 295.2 169.2 302.4C164.5 309.6 159.9 318.1 156.5 325.3C153.1 332.5 149.7 338.4 148.8 345.6C148.0 352.8 149.3 361.7 151.4 368.5C153.5 375.3 157.7 382.1 161.5 386.3C165.3 390.6 169.2 394.0 174.3 394.0C179.4 394.0 186.1 391.0 192.0 386.3C197.9 381.6 205.7 372.8 209.9 366.0C214.2 359.2 214.1 352.8 217.5 345.6C220.9 338.4 225.5 330.3 230.2 322.7C234.9 315.1 240.8 306.6 245.5 299.8C250.2 293.0 255.9 286.7 258.2 282.0C260.5 277.3 262.0 275.2 259.5 271.8Z" fill="url(#tg)" stroke="#9574b4" stroke-width="2.4"/><path d="M373.0 20.5C369.1 20.7 363.3 23.8 359.0 27.5C354.7 31.2 350.6 37.1 347.3 42.7C344.0 48.3 341.1 54.3 339.2 61.3C337.3 68.3 336.5 76.5 335.7 84.7C334.9 92.9 334.1 101.8 334.5 110.3C334.9 118.8 335.9 127.8 338.0 136.0C340.1 144.2 343.0 151.5 347.3 159.3C351.6 167.1 357.5 175.3 363.7 182.7C369.9 190.1 377.3 198.3 384.7 203.7C392.1 209.1 400.6 212.4 408.0 215.3C415.4 218.2 422.4 221.2 429.0 221.2C435.6 221.2 443.4 219.4 447.7 215.3C452.0 211.2 454.1 202.9 454.7 196.7C455.3 190.5 454.7 185.8 451.2 178.0C447.7 170.2 438.6 159.3 433.7 150.0C428.8 140.7 427.1 132.1 422.0 122.0C416.9 111.9 408.0 97.8 403.3 89.3C398.6 80.8 395.9 77.7 394.0 70.7C392.1 63.7 393.6 54.7 391.7 47.3C389.8 39.9 385.4 30.8 382.3 26.3C379.2 21.8 376.9 20.3 373.0 20.5Z" fill="url(#tg)" stroke="#9574b4" stroke-width="2.4"/><path d="M449.7 35.9C452.1 33.4 454.7 30.6 459.2 31.9C463.7 33.2 470.6 39.5 476.7 43.9C482.8 48.3 489.7 53.2 495.8 58.2C501.9 63.2 509.0 71.2 513.3 74.1C517.5 77.0 521.0 74.6 521.3 75.7C521.6 76.8 514.6 76.5 514.9 80.5C515.2 84.5 520.0 92.6 522.9 99.5C525.8 106.4 529.5 122.8 532.4 121.8C535.3 120.8 538.8 100.3 540.4 93.2C542.0 86.1 540.3 80.0 541.9 78.9C543.5 77.8 548.3 82.8 549.9 86.8C551.5 90.8 552.0 95.3 551.5 102.7C551.0 110.1 548.6 123.2 546.7 131.4C544.9 139.6 543.6 147.2 540.4 152.0C537.2 156.8 532.9 159.5 527.6 160.0C522.3 160.5 514.3 157.8 508.5 155.2C502.7 152.5 497.9 148.1 492.6 144.1C487.3 140.1 481.2 135.7 476.7 131.4C472.2 127.2 468.8 123.9 465.6 118.6C462.4 113.3 459.7 105.8 457.6 99.5C455.5 93.2 455.8 85.0 452.9 80.5C450.0 76.0 442.0 76.0 440.1 72.5C438.2 69.0 440.9 64.0 441.7 59.8C442.5 55.5 443.6 51.0 444.9 47.0C446.2 43.0 447.3 38.4 449.7 35.9Z" fill="url(#tg)" stroke="#9574b4" stroke-width="2.4"/><defs><filter id="tx" x="0" y="0" width="100%" height="100%"><feTurbulence type="fractalNoise" baseFrequency="0.45" numOctaves="2" seed="3"/><feColorMatrix type="matrix" values="0 0 0 0 1  0 0 0 0 1  0 0 0 0 1  1.6 0 0 0 -0.78"/></filter><filter id="tx2" x="0" y="0" width="100%" height="100%"><feTurbulence type="fractalNoise" baseFrequency="0.08" numOctaves="2" seed="7"/><feColorMatrix type="matrix" values="0 0 0 0 0.55  0 0 0 0 0.42  0 0 0 0 0.72  1.4 0 0 0 -0.55"/></filter><clipPath id="tc"><path d="M184.4 193.0C181.6 190.0 172.9 184.9 166.6 182.8C160.2 180.7 153.5 179.7 146.3 180.3C139.1 180.9 131.5 183.7 123.4 186.6C115.4 189.5 105.6 193.6 98.0 198.0C90.4 202.4 84.0 207.4 77.6 213.3C71.2 219.2 65.3 226.5 59.8 233.7C54.3 240.9 48.7 249.0 44.5 256.6C40.3 264.2 36.9 271.9 34.4 279.5C31.9 287.1 29.9 295.2 29.3 302.4C28.7 309.6 28.8 316.3 30.5 322.7C32.2 329.1 34.9 335.6 39.4 340.5C43.9 345.4 51.3 350.7 57.2 352.0C63.1 353.3 69.7 351.0 75.0 348.2C80.3 345.4 85.6 340.9 89.0 335.4C92.4 329.9 93.1 320.9 95.4 315.0C97.7 309.1 99.6 304.9 103.0 299.8C106.4 294.7 111.5 290.5 115.8 284.6C120.0 278.7 124.3 271.0 128.5 264.2C132.7 257.4 136.5 249.0 141.2 243.9C145.9 238.8 151.4 238.4 156.5 233.7C161.6 229.0 167.2 221.4 171.7 215.9C176.1 210.4 181.1 204.4 183.2 200.6C185.3 196.8 187.2 196.0 184.4 193.0Z"/><path d="M259.5 271.8C257.0 268.4 249.2 263.6 243.0 261.7C236.8 259.8 229.4 259.5 222.6 260.4C215.8 261.2 208.6 263.2 202.2 266.8C195.8 270.4 189.9 276.1 184.4 282.0C178.9 287.9 173.8 295.2 169.2 302.4C164.5 309.6 159.9 318.1 156.5 325.3C153.1 332.5 149.7 338.4 148.8 345.6C148.0 352.8 149.3 361.7 151.4 368.5C153.5 375.3 157.7 382.1 161.5 386.3C165.3 390.6 169.2 394.0 174.3 394.0C179.4 394.0 186.1 391.0 192.0 386.3C197.9 381.6 205.7 372.8 209.9 366.0C214.2 359.2 214.1 352.8 217.5 345.6C220.9 338.4 225.5 330.3 230.2 322.7C234.9 315.1 240.8 306.6 245.5 299.8C250.2 293.0 255.9 286.7 258.2 282.0C260.5 277.3 262.0 275.2 259.5 271.8Z"/><path d="M373.0 20.5C369.1 20.7 363.3 23.8 359.0 27.5C354.7 31.2 350.6 37.1 347.3 42.7C344.0 48.3 341.1 54.3 339.2 61.3C337.3 68.3 336.5 76.5 335.7 84.7C334.9 92.9 334.1 101.8 334.5 110.3C334.9 118.8 335.9 127.8 338.0 136.0C340.1 144.2 343.0 151.5 347.3 159.3C351.6 167.1 357.5 175.3 363.7 182.7C369.9 190.1 377.3 198.3 384.7 203.7C392.1 209.1 400.6 212.4 408.0 215.3C415.4 218.2 422.4 221.2 429.0 221.2C435.6 221.2 443.4 219.4 447.7 215.3C452.0 211.2 454.1 202.9 454.7 196.7C455.3 190.5 454.7 185.8 451.2 178.0C447.7 170.2 438.6 159.3 433.7 150.0C428.8 140.7 427.1 132.1 422.0 122.0C416.9 111.9 408.0 97.8 403.3 89.3C398.6 80.8 395.9 77.7 394.0 70.7C392.1 63.7 393.6 54.7 391.7 47.3C389.8 39.9 385.4 30.8 382.3 26.3C379.2 21.8 376.9 20.3 373.0 20.5Z"/><path d="M449.7 35.9C452.1 33.4 454.7 30.6 459.2 31.9C463.7 33.2 470.6 39.5 476.7 43.9C482.8 48.3 489.7 53.2 495.8 58.2C501.9 63.2 509.0 71.2 513.3 74.1C517.5 77.0 521.0 74.6 521.3 75.7C521.6 76.8 514.6 76.5 514.9 80.5C515.2 84.5 520.0 92.6 522.9 99.5C525.8 106.4 529.5 122.8 532.4 121.8C535.3 120.8 538.8 100.3 540.4 93.2C542.0 86.1 540.3 80.0 541.9 78.9C543.5 77.8 548.3 82.8 549.9 86.8C551.5 90.8 552.0 95.3 551.5 102.7C551.0 110.1 548.6 123.2 546.7 131.4C544.9 139.6 543.6 147.2 540.4 152.0C537.2 156.8 532.9 159.5 527.6 160.0C522.3 160.5 514.3 157.8 508.5 155.2C502.7 152.5 497.9 148.1 492.6 144.1C487.3 140.1 481.2 135.7 476.7 131.4C472.2 127.2 468.8 123.9 465.6 118.6C462.4 113.3 459.7 105.8 457.6 99.5C455.5 93.2 455.8 85.0 452.9 80.5C450.0 76.0 442.0 76.0 440.1 72.5C438.2 69.0 440.9 64.0 441.7 59.8C442.5 55.5 443.6 51.0 444.9 47.0C446.2 43.0 447.3 38.4 449.7 35.9Z"/></clipPath></defs><g clip-path="url(#tc)"><rect width="584" height="434" filter="url(#tx2)" opacity="0.5"/><rect width="584" height="434" filter="url(#tx)" opacity="0.55"/></g><path d="M440.1 72.5C439.0 70.1 441.9 65.3 448.0 65.3C454.1 65.3 465.8 70.4 476.7 72.5C487.6 74.6 510.6 76.8 513.3 78.1C515.9 79.4 502.4 80.2 492.6 80.5C482.8 80.8 463.2 81.0 454.5 79.7C445.8 78.4 441.2 74.9 440.1 72.5Z" fill="#a5447f"/><circle cx="123.4" cy="246.9" r="4.8" fill="none" stroke="#000" stroke-width="5"/><circle cx="123.4" cy="246.9" r="1.3" fill="#fff"/><path d="M128 248.5 L137 249.5 L136.5 251.5 L128 251.5Z" fill="#000" stroke="#000" stroke-width="1.2"/><path d="M54 248.5 L69.5 256 L70.5 253.5 L74.5 261 L66.5 262 L67.5 259.5 L52 252Z" fill="#e8dfe0" stroke="#111" stroke-width="1.2"/><circle cx="43.3" cy="392.2" r="3.3" fill="none" stroke="#e41c1c" stroke-width="2.4"/><path d="M43.3 388 V396.4" stroke="#f0c8c8" stroke-width="1"/></svg>

</body></html>
